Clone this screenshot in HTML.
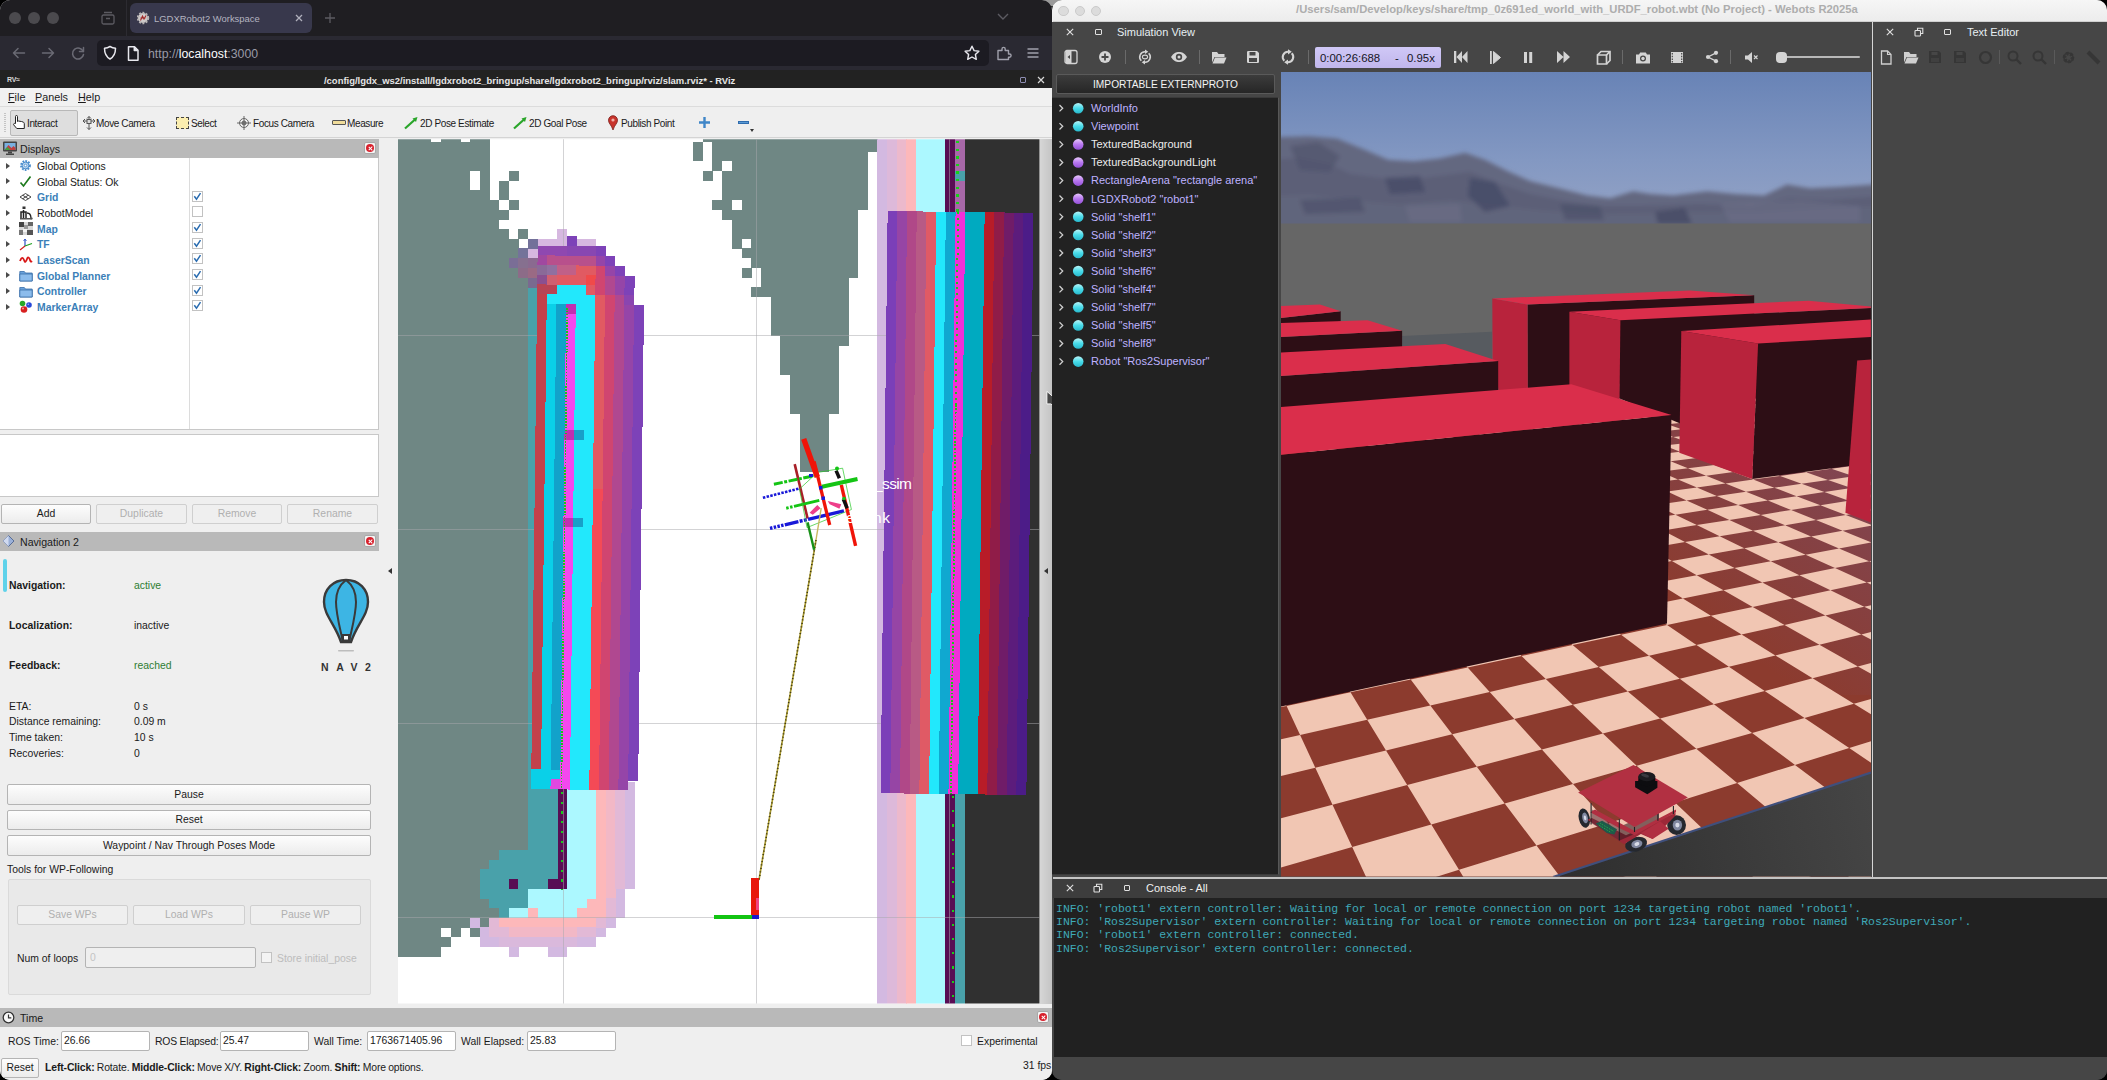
<!DOCTYPE html>
<html lang="en"><head><meta charset="utf-8"><title>LGDXRobot2 Workspace</title>
<style>
*{box-sizing:border-box;margin:0;padding:0}
html,body{width:2107px;height:1080px;overflow:hidden;background:#000}
body{position:relative;font-family:"Liberation Sans","DejaVu Sans",sans-serif;font-size:11px;color:#1a1a1a}
.a{position:absolute}
.t{position:absolute;white-space:nowrap;line-height:1}
/* firefox */
#ff{left:0;top:0;width:1052px;height:1080px;background:#efefef;border-radius:10px 10px 10px 10px;overflow:hidden}
#tabs{left:0;top:0;width:1052px;height:36px;background:#1f1e22}
#nav{left:0;top:36px;width:1052px;height:34px;background:#2a2932}
#url{left:97px;top:40px;width:892px;height:26px;border-radius:5px;background:#1c1b22}
#rt{left:0;top:70px;width:1052px;height:18px;background:#222222}
#menu{left:0;top:88px;width:1052px;height:19px;background:#f1f1f1;border-bottom:1px solid #dcdcdc}
#tool{left:0;top:107px;width:1052px;height:31px;background:#efefef;border-bottom:1px solid #d4d4d4}
.rv{font-family:"DejaVu Sans","Liberation Sans",sans-serif;font-size:10px;letter-spacing:-0.35px;color:#1b1b1b}
.hdr{background:#b9b9b9;height:19px}
#rvp .t{margin-top:1px}
.btn{position:absolute;border:1px solid #b4b4b4;border-radius:2px;background:linear-gradient(#fdfdfd,#ececec);text-align:center;white-space:nowrap}
.btn.dis{color:#b0b0b0;background:#efefef;border-color:#cfcfcf}
.inp{position:absolute;background:#fff;border:1px solid #b4b4b4;border-radius:2px;white-space:nowrap}
.cb{position:absolute;width:11px;height:11px;background:#fff;border:1px solid #c2c2c2}
.blue{color:#3b7fb8;font-weight:bold}
.x{position:absolute;width:12px;height:12px;border:1px solid #a8a8a8;border-radius:2px;background:#f4f4f4}
.x i{position:absolute;left:1px;top:1px;width:8px;height:8px;border-radius:50%;background:#d8202c}
.x i:before,.x i:after{content:"";position:absolute;left:3.5px;top:1.5px;width:1.2px;height:5px;background:#fff;transform:rotate(45deg)}
.x i:after{transform:rotate(-45deg)}
/* webots */
#wb{left:1052px;top:0;width:1055px;height:1080px;background:#464646;border-radius:10px;overflow:hidden}
.wt{position:absolute;white-space:nowrap;line-height:1;color:#e6eef2;font-size:11px}
</style></head><body>
<div class="a" style="left:1040px;top:0;width:26px;height:6px;background:#9a9a9a"></div>
<div id="ff" class="a">
<div id="tabs" class="a">
 <div class="a" style="left:9px;top:12px;width:12px;height:12px;border-radius:50%;background:#4b4a4e"></div>
 <div class="a" style="left:28px;top:12px;width:12px;height:12px;border-radius:50%;background:#4b4a4e"></div>
 <div class="a" style="left:47px;top:12px;width:12px;height:12px;border-radius:50%;background:#4b4a4e"></div>
 <svg class="a" style="left:100px;top:10px" width="16" height="16" viewBox="0 0 16 16" fill="none" stroke="#5c5b62" stroke-width="1.3"><rect x="2" y="5" width="12" height="9" rx="1.5"/><path d="M4 2.5h8M6 8.5h4"/></svg>
 <div class="a" style="left:126px;top:0;width:1px;height:36px;background:#2c2b31"></div>
 <div class="a" style="left:130px;top:3px;width:182px;height:30px;border-radius:6px;background:#38384c"></div>
 <svg class="a" style="left:136px;top:11px" width="14" height="14" viewBox="0 0 14 14"><circle cx="7" cy="7" r="5" fill="#d0cccc" stroke="#b8b4b4" stroke-width="2.400" stroke-dasharray="1.800 1.400"/><path d="M4.500 9.500l2-4.500 1.500 3 2-3.500M4.500 7h5" stroke="#a02828" stroke-width="1.100" fill="none"/></svg>
 <div class="t" style="left:154px;top:13.500px;font-size:9.450px;color:#b4b4c0">LGDXRobot2 Workspace</div>
 <svg class="a" style="left:294px;top:13px" width="10" height="10" viewBox="0 0 10 10" stroke="#b0b0bc" stroke-width="1.3"><path d="M2 2l6 6M8 2l-6 6"/></svg>
 <svg class="a" style="left:323px;top:11px" width="14" height="14" viewBox="0 0 14 14" stroke="#5c5b62" stroke-width="1.3"><path d="M7 2v10M2 7h10"/></svg>
 <svg class="a" style="left:996px;top:12px" width="14" height="10" viewBox="0 0 14 10" stroke="#5c5b62" stroke-width="1.4" fill="none"><path d="M2 2l5 5 5-5"/></svg>
</div>
<div id="nav" class="a"></div>
<div id="url" class="a"></div>
<svg class="a" style="left:10px;top:44px" width="18" height="18" viewBox="0 0 18 18" fill="none" stroke="#6a6a74" stroke-width="1.5" stroke-linecap="round" stroke-linejoin="round"><path d="M14.5 9h-11M8 4.5L3.5 9 8 13.5"/></svg>
<svg class="a" style="left:39px;top:44px" width="18" height="18" viewBox="0 0 18 18" fill="none" stroke="#6a6a74" stroke-width="1.5" stroke-linecap="round" stroke-linejoin="round"><path d="M3.5 9h11M10 4.5L14.500 9 10 13.5"/></svg>
<svg class="a" style="left:69px;top:44px" width="18" height="18" viewBox="0 0 18 18" fill="none" stroke="#6a6a74" stroke-width="1.5" stroke-linecap="round" stroke-linejoin="round"><path d="M14.200 7.500A5.500 5.500 0 1 0 14.500 10.500"/><path d="M14.500 3.500v4h-4" /></svg>
<svg class="a" style="left:102px;top:44px" width="16" height="18" viewBox="0 0 16 18" fill="none" stroke="#e8e8ee" stroke-width="1.5" stroke-linejoin="round"><path d="M8 2.500c2 1.300 3.800 1.700 5.500 1.800 0 5-1.500 8.500-5.500 10.700C4 12.800 2.500 9.300 2.500 4.300 4.200 4.200 6 3.800 8 2.500z"/></svg>
<svg class="a" style="left:126px;top:45px" width="14" height="17" viewBox="0 0 14 17" fill="none" stroke="#e8e8ee" stroke-width="1.5" stroke-linejoin="round"><path d="M2.500 1.800h6l3.500 3.500v10h-9.500z"/><path d="M8.300 2v3.500h3.500" fill="#e8e8ee"/></svg>
<div class="t" style="left:148px;top:48px;font-size:12.300px;color:#9a9aa6">http://<span style="color:#fbfbfe">localhost</span>:3000</div>
<svg class="a" style="left:963px;top:44px" width="18" height="18" viewBox="0 0 18 18" fill="none" stroke="#e8e8ee" stroke-width="1.4" stroke-linejoin="round"><path d="M9 2.200l2.100 4.400 4.800.6-3.500 3.300.9 4.800L9 13l-4.300 2.300.9-4.800L2.100 7.200l4.800-.6z"/></svg>
<svg class="a" style="left:995px;top:44px" width="18" height="18" viewBox="0 0 18 18" fill="none" stroke="#a0a0ac" stroke-width="1.4" stroke-linejoin="round"><path d="M3 6.500h4v-1.500a1.600 1.600 0 1 1 3.200 0v1.500h3.300v3.500h1a1.600 1.600 0 1 1 0 3.200h-1v2.300h-10.500z"/></svg>
<svg class="a" style="left:1026px;top:46px" width="14" height="14" viewBox="0 0 14 14" stroke="#a0a0ac" stroke-width="1.4"><path d="M1.500 3h11M1.500 7h11M1.500 11h11"/></svg>
<div id="rt" class="a">
 <div class="t" style="left:7px;top:6px;font-size:7px;font-weight:bold;color:#d8d8d8;letter-spacing:-0.3px">RV≈</div>
 <div class="t" style="left:324px;top:5.500px;font-size:9.450px;font-weight:bold;color:#e6e6e6;letter-spacing:0">/config/lgdx_ws2/install/lgdxrobot2_bringup/share/lgdxrobot2_bringup/rviz/slam.rviz* - RViz</div>
 <div class="a" style="left:1020px;top:6.500px;width:6px;height:6px;border:1px solid #8c8cb0;border-radius:1px"></div>
 <svg class="a" style="left:1037px;top:5.500px" width="8" height="8" viewBox="0 0 8 8" stroke="#d8d8d8" stroke-width="1.2"><path d="M1 1l6 6M7 1l-6 6"/></svg>
</div>
<div id="menu" class="a">
 <div class="t" style="left:8px;top:4px;font-size:10.8px"><u>F</u>ile</div>
 <div class="t" style="left:35px;top:4px;font-size:10.8px"><u>P</u>anels</div>
 <div class="t" style="left:78px;top:4px;font-size:10.8px"><u>H</u>elp</div>
</div>
<div id="tool" class="a" style="font-size:10px;letter-spacing:-0.38px">
 <div class="a" style="left:4px;top:6px;width:2px;height:19px;border-left:1px dotted #c4c4c4;border-right:1px dotted #c4c4c4"></div>
 <div class="a" style="left:10px;top:3px;width:68px;height:26px;border:1px solid #b8b8b8;border-radius:2px;background:#dedede"></div>
 <svg class="a" style="left:11px;top:7px" width="16" height="17" viewBox="0 0 16 17" fill="#fff" stroke="#222" stroke-width="1"><path d="M4.500 9.500v-7a1 1 0 0 1 2 0v5l1-.5 1.500.3 1.500.2 1.500.5c1 .4 1.300 1 1.300 2v4.500h-7.500l-3-3.500c-.7-1 .3-2 1.700-1.500z"/></svg>
 <div class="t" style="left:27px;top:12px">Interact</div>
 <svg class="a" style="left:81px;top:8px" width="16" height="16" viewBox="0 0 16 16" fill="none" stroke="#555" stroke-width="1"><path d="M8 1.500v13M2 6h12M8 1.500l-2 2M8 1.500l2 2M2 6l2-2M2 6l2 2M14 6l-2-2M14 6l-2 2M8 14.500l-2-2M8 14.500l2-2"/><rect x="6" y="4.500" width="4" height="4" fill="#ddd"/></svg>
 <div class="t" style="left:96px;top:12px">Move Camera</div>
 <div class="a" style="left:176px;top:10px;width:13px;height:12px;background:#fbeeb0;border:1px dashed #444"></div>
 <div class="t" style="left:191px;top:12px">Select</div>
 <svg class="a" style="left:236px;top:8px" width="16" height="16" viewBox="0 0 16 16" fill="none" stroke="#666" stroke-width="1"><circle cx="8" cy="8" r="4.500"/><circle cx="8" cy="8" r="2" fill="#888"/><path d="M8 1v14M1 8h14"/></svg>
 <div class="t" style="left:253px;top:12px">Focus Camera</div>
 <div class="a" style="left:332px;top:13px;width:14px;height:5px;background:#f0dc9a;border:1px solid #555;border-radius:1px"></div>
 <div class="t" style="left:347px;top:12px">Measure</div>
 <svg class="a" style="left:404px;top:9px" width="14" height="14" viewBox="0 0 14 14"><path d="M1 12.500L11 3.500" stroke="#2aa52a" stroke-width="2.200"/><path d="M13.500 1l-5 1.500 3.500 3.500z" fill="#2aa52a"/></svg>
 <div class="t" style="left:420px;top:12px">2D Pose Estimate</div>
 <svg class="a" style="left:513px;top:9px" width="14" height="14" viewBox="0 0 14 14"><path d="M1 12.500L11 3.500" stroke="#2aa52a" stroke-width="2.200"/><path d="M13.500 1l-5 1.500 3.500 3.500z" fill="#2aa52a"/></svg>
 <div class="t" style="left:529px;top:12px">2D Goal Pose</div>
 <svg class="a" style="left:607px;top:8px" width="12" height="16" viewBox="0 0 12 16"><path d="M6 15C4.500 10 1.500 8.500 1.500 5.200a4.500 4.500 0 0 1 9 0C10.500 8.500 7.500 10 6 15z" fill="#c8342c" stroke="#7a1c18" stroke-width=".8"/><circle cx="6" cy="5" r="1.600" fill="#f0b0a8"/></svg>
 <div class="t" style="left:621px;top:12px">Publish Point</div>
 <svg class="a" style="left:698px;top:9px" width="13" height="13" viewBox="0 0 13 13" stroke="#3f86c8" stroke-width="2.400"><path d="M6.500 1v11M1 6.500h11"/></svg>
 <div class="a" style="left:738px;top:14px;width:11px;height:3px;background:#5a9ad4;border:0.500px solid #2f6cae"></div>
 <div class="a" style="left:750px;top:22px;width:0;height:0;border-left:2.500px solid transparent;border-right:2.500px solid transparent;border-top:3px solid #333"></div>
</div>
<div class="a" id="rvp" style="left:0;top:139px;width:1052px;height:941px;background:#efefef;font-size:10.400px">
<!-- Displays panel ; coordinates relative to y=139 -->
<div class="a hdr" style="left:0;top:0;width:379px"></div>
<svg class="a" style="left:2px;top:1px" width="16" height="16" viewBox="0 0 16 16"><rect x="1" y="1.500" width="14" height="10" rx="1" fill="#444"/><rect x="2.500" y="3" width="11" height="7" fill="#7ab0e0"/><path d="M2.500 10l4-5 3 3 2-2 2 2v2z" fill="#c04040"/><path d="M2.500 10l3-3 3 3z" fill="#40a040"/><rect x="6" y="11.500" width="4" height="2" fill="#444"/><rect x="4" y="13.500" width="8" height="1.500" fill="#444"/></svg>
<div class="t" style="left:20px;top:4px;font-size:10.600px">Displays</div>
<div class="x" style="left:364px;top:3px"><i></i></div>
<div class="a" style="left:0;top:19px;width:379px;height:272px;background:#fff;border-right:1px solid #c8c8c8;border-bottom:1px solid #c8c8c8"></div>
<div class="a" style="left:189px;top:19px;width:1px;height:271px;background:#dcdcdc"></div>
<div class="a" style="left:6px;top:23.7px;width:0;height:0;border-top:3.200px solid transparent;border-bottom:3.200px solid transparent;border-left:4px solid #4a4a4a"></div>
<svg class="a" style="left:19px;top:20.2px" width="13" height="13" viewBox="0 0 13 13"><circle cx="6.500" cy="6.500" r="4.300" fill="none" stroke="#4a8ccc" stroke-width="2.200" stroke-dasharray="1.700 1.100"/><circle cx="6.500" cy="6.500" r="3.400" fill="#b8d4ee" stroke="#4a8ccc" stroke-width="1"/><circle cx="6.500" cy="6.500" r="1.300" fill="#fff" stroke="#4a8ccc" stroke-width=".8"/></svg>
<div class="t" style="left:37px;top:21.9px">Global Options</div>
<div class="a" style="left:6px;top:39.4px;width:0;height:0;border-top:3.200px solid transparent;border-bottom:3.200px solid transparent;border-left:4px solid #4a4a4a"></div>
<svg class="a" style="left:19px;top:35.9px" width="13" height="13" viewBox="0 0 13 13"><path d="M1.500 7.500l3 3.500 7-9.500" fill="none" stroke="#1e7a1e" stroke-width="1.700"/></svg>
<div class="t" style="left:37px;top:37.6px">Global Status: Ok</div>
<div class="a" style="left:6px;top:55.0px;width:0;height:0;border-top:3.200px solid transparent;border-bottom:3.200px solid transparent;border-left:4px solid #4a4a4a"></div>
<svg class="a" style="left:19px;top:51.5px" width="13" height="13" viewBox="0 0 13 13" fill="none" stroke="#333" stroke-width=".9"><path d="M6.500 2.500l5.500 3.500-5.500 3.500L1 6z"/><path d="M3.700 4.200l5.600 3.600M9.300 4.200L3.700 7.800"/></svg>
<div class="t blue" style="left:37px;top:53.2px">Grid</div>
<div class="cb" style="left:192px;top:51.7px"></div>
<svg class="a" style="left:193px;top:52.7px" width="9" height="9" viewBox="0 0 9 9"><path d="M1.300 4.200l2.200 3 4-6" fill="none" stroke="#2a6cb0" stroke-width="1.500"/></svg>
<div class="a" style="left:6px;top:70.7px;width:0;height:0;border-top:3.200px solid transparent;border-bottom:3.200px solid transparent;border-left:4px solid #4a4a4a"></div>
<svg class="a" style="left:19px;top:67.2px" width="14" height="14" viewBox="0 0 14 14"><rect x="3.500" y="0.500" width="3" height="2.500" fill="#333"/><path d="M2 13V6h5v7M4.500 4v9" stroke="#222" stroke-width="1.500" fill="none"/><path d="M8 7c3 0 4 2 4 5.500h1.500" stroke="#222" stroke-width="1.300" fill="none"/><rect x="1" y="12" width="12" height="1.500" fill="#555"/></svg>
<div class="t" style="left:37px;top:68.9px">RobotModel</div>
<div class="cb" style="left:192px;top:67.4px"></div>
<div class="a" style="left:6px;top:86.4px;width:0;height:0;border-top:3.200px solid transparent;border-bottom:3.200px solid transparent;border-left:4px solid #4a4a4a"></div>
<svg class="a" style="left:19px;top:82.9px" width="14" height="13" viewBox="0 0 14 13"><rect x="0" y="0" width="14" height="13" fill="#d8d8d8"/><rect x="0" y="0" width="5" height="5" fill="#444"/><rect x="5" y="3" width="4" height="4" fill="#999"/><rect x="9" y="0" width="5" height="4" fill="#666"/><rect x="0" y="8" width="4" height="5" fill="#777"/><rect x="8" y="8" width="6" height="5" fill="#555"/><rect x="4" y="7" width="4" height="3" fill="#f4f4f4"/></svg>
<div class="t blue" style="left:37px;top:84.6px">Map</div>
<div class="cb" style="left:192px;top:83.1px"></div>
<svg class="a" style="left:193px;top:84.1px" width="9" height="9" viewBox="0 0 9 9"><path d="M1.300 4.200l2.200 3 4-6" fill="none" stroke="#2a6cb0" stroke-width="1.500"/></svg>
<div class="a" style="left:6px;top:102.0px;width:0;height:0;border-top:3.200px solid transparent;border-bottom:3.200px solid transparent;border-left:4px solid #4a4a4a"></div>
<svg class="a" style="left:19px;top:98.5px" width="14" height="13" viewBox="0 0 14 13" fill="none" stroke-width="1.200"><path d="M6 8V1" stroke="#2a52c8"/><path d="M6 8L1 12" stroke="#d02020"/><path d="M6 8l7-2.500" stroke="#20a020"/><path d="M6 1l-1.500 2M6 1l1.500 2" stroke="#2a52c8" stroke-width=".8"/></svg>
<div class="t blue" style="left:37px;top:100.2px">TF</div>
<div class="cb" style="left:192px;top:98.7px"></div>
<svg class="a" style="left:193px;top:99.7px" width="9" height="9" viewBox="0 0 9 9"><path d="M1.300 4.200l2.200 3 4-6" fill="none" stroke="#2a6cb0" stroke-width="1.500"/></svg>
<div class="a" style="left:6px;top:117.7px;width:0;height:0;border-top:3.200px solid transparent;border-bottom:3.200px solid transparent;border-left:4px solid #4a4a4a"></div>
<svg class="a" style="left:19px;top:114.2px" width="14" height="13" viewBox="0 0 14 13"><path d="M1 8c1.500-4 3-4 4-1s2 2 3-1 2.500-1 3 1 1 2 2 1" fill="none" stroke="#d81818" stroke-width="1.800"/></svg>
<div class="t blue" style="left:37px;top:115.9px">LaserScan</div>
<div class="cb" style="left:192px;top:114.4px"></div>
<svg class="a" style="left:193px;top:115.4px" width="9" height="9" viewBox="0 0 9 9"><path d="M1.300 4.200l2.200 3 4-6" fill="none" stroke="#2a6cb0" stroke-width="1.500"/></svg>
<div class="a" style="left:6px;top:133.4px;width:0;height:0;border-top:3.200px solid transparent;border-bottom:3.200px solid transparent;border-left:4px solid #4a4a4a"></div>
<svg class="a" style="left:19px;top:129.9px" width="14" height="13" viewBox="0 0 14 13"><path d="M.8 2.500h4.500l1.200 1.500h6.700v8H.8z" fill="#6aa2dc" stroke="#3a6ea8" stroke-width=".8"/><path d="M.8 5h12.400v7H.8z" fill="#8cbcec" stroke="#3a6ea8" stroke-width=".8"/></svg>
<div class="t blue" style="left:37px;top:131.6px">Global Planner</div>
<div class="cb" style="left:192px;top:130.1px"></div>
<svg class="a" style="left:193px;top:131.1px" width="9" height="9" viewBox="0 0 9 9"><path d="M1.300 4.200l2.200 3 4-6" fill="none" stroke="#2a6cb0" stroke-width="1.500"/></svg>
<div class="a" style="left:6px;top:149.1px;width:0;height:0;border-top:3.200px solid transparent;border-bottom:3.200px solid transparent;border-left:4px solid #4a4a4a"></div>
<svg class="a" style="left:19px;top:145.6px" width="14" height="13" viewBox="0 0 14 13"><path d="M.8 2.500h4.500l1.200 1.500h6.700v8H.8z" fill="#6aa2dc" stroke="#3a6ea8" stroke-width=".8"/><path d="M.8 5h12.400v7H.8z" fill="#8cbcec" stroke="#3a6ea8" stroke-width=".8"/></svg>
<div class="t blue" style="left:37px;top:147.3px">Controller</div>
<div class="cb" style="left:192px;top:145.8px"></div>
<svg class="a" style="left:193px;top:146.8px" width="9" height="9" viewBox="0 0 9 9"><path d="M1.300 4.200l2.200 3 4-6" fill="none" stroke="#2a6cb0" stroke-width="1.500"/></svg>
<div class="a" style="left:6px;top:164.7px;width:0;height:0;border-top:3.200px solid transparent;border-bottom:3.200px solid transparent;border-left:4px solid #4a4a4a"></div>
<svg class="a" style="left:19px;top:161.2px" width="14" height="14" viewBox="0 0 14 14"><circle cx="3.500" cy="3.500" r="2.800" fill="#28a828"/><circle cx="10" cy="5" r="2.800" fill="#2848d8"/><circle cx="5" cy="9.500" r="3.300" fill="#d82020"/><circle cx="4" cy="8.500" r="1" fill="#f8a0a0"/><circle cx="9.300" cy="4.200" r=".8" fill="#a0b0f8"/></svg>
<div class="t blue" style="left:37px;top:162.9px">MarkerArray</div>
<div class="cb" style="left:192px;top:161.4px"></div>
<svg class="a" style="left:193px;top:162.4px" width="9" height="9" viewBox="0 0 9 9"><path d="M1.300 4.200l2.200 3 4-6" fill="none" stroke="#2a6cb0" stroke-width="1.500"/></svg>
<div class="a" style="left:0;top:295px;width:379px;height:63px;background:#fff;border:1px solid #c8c8c8;border-left:0"></div>
<div class="btn" style="left:1px;top:365px;width:90px;height:20px;line-height:18px">Add</div>
<div class="btn dis" style="left:96px;top:365px;width:91px;height:20px;line-height:18px">Duplicate</div>
<div class="btn dis" style="left:192px;top:365px;width:90px;height:20px;line-height:18px">Remove</div>
<div class="btn dis" style="left:287px;top:365px;width:91px;height:20px;line-height:18px">Rename</div>
<!-- Navigation 2 -->
<div class="a hdr" style="left:0;top:393px;width:379px"></div>
<svg class="a" style="left:2px;top:396px" width="13" height="12" viewBox="0 0 13 12"><path d="M6.500 .5l5.500 5.500-5.500 5.500L1 6z" fill="#9ab0d8" stroke="#445a88" stroke-width=".8"/><path d="M6.500 .5v11L1 6z" fill="#d0daf0"/></svg>
<div class="t" style="left:20px;top:397px;font-size:10.600px">Navigation 2</div>
<div class="x" style="left:364px;top:396px"><i></i></div>
<div class="a" style="left:3px;top:420px;width:4px;height:33px;background:#5fd2ea;border-radius:2px"></div>
<div class="t" style="left:9px;top:441px;font-weight:bold">Navigation:</div><div class="t" style="left:134px;top:441px;color:#2e7d32">active</div>
<div class="t" style="left:9px;top:481px;font-weight:bold">Localization:</div><div class="t" style="left:134px;top:481px">inactive</div>
<div class="t" style="left:9px;top:521px;font-weight:bold">Feedback:</div><div class="t" style="left:134px;top:521px;color:#2e7d32">reached</div>
<div class="t" style="left:9px;top:562px">ETA:</div><div class="t" style="left:134px;top:562px">0 s</div>
<div class="t" style="left:9px;top:577px">Distance remaining:</div><div class="t" style="left:134px;top:577px">0.09 m</div>
<div class="t" style="left:9px;top:593px">Time taken:</div><div class="t" style="left:134px;top:593px">10 s</div>
<div class="t" style="left:9px;top:609px">Recoveries:</div><div class="t" style="left:134px;top:609px">0</div>
<svg class="a" style="left:318px;top:438px" width="56" height="100" viewBox="0 0 56 100">
 <path d="M28 3C15 3 6 12 6 25c0 13 11 22 17 40h10c6-18 17-27 17-40C50 12 41 3 28 3z" fill="#3db5e4" stroke="#3a3a3a" stroke-width="2.400"/>
 <path d="M28 3c-8 6-10 14-10 22 0 12 4 26 7 40M28 3c8 6 10 14 10 22 0 12-4 26-7 40" fill="none" stroke="#3a3a3a" stroke-width="2"/>
 <rect x="23.500" y="57" width="9" height="8" fill="#3a3a3a"/><rect x="26" y="59" width="4" height="3.500" fill="#fff"/>
 <rect x="20" y="73" width="16" height="1.500" rx=".7" fill="#bdbdbd"/>
 <text x="28" y="94" text-anchor="middle" font-family="Liberation Sans,sans-serif" font-weight="bold" font-size="10.500" letter-spacing="7.500" fill="#333" dx="3.700">NAV2</text>
</svg>
<div class="btn" style="left:7px;top:645px;width:364px;height:21px;line-height:19px">Pause</div>
<div class="btn" style="left:7px;top:671px;width:364px;height:20px;line-height:18px">Reset</div>
<div class="btn" style="left:7px;top:696px;width:364px;height:21px;line-height:19px">Waypoint / Nav Through Poses Mode</div>
<div class="t" style="left:7px;top:725px">Tools for WP-Following</div>
<div class="a" style="left:8px;top:740px;width:363px;height:116px;background:#e9e9e9;border:1px solid #dadada;border-radius:2px"></div>
<div class="btn dis" style="left:17px;top:766px;width:111px;height:20px;line-height:18px">Save WPs</div>
<div class="btn dis" style="left:133px;top:766px;width:112px;height:20px;line-height:18px">Load WPs</div>
<div class="btn dis" style="left:250px;top:766px;width:111px;height:20px;line-height:18px">Pause WP</div>
<div class="t" style="left:17px;top:814px">Num of loops</div>
<div class="inp" style="left:85px;top:808px;width:171px;height:21px;background:#efefef;line-height:19px;padding-left:4px;color:#c4c4c4">0</div>
<div class="cb" style="left:261px;top:813px;background:#f4f4f4"></div>
<div class="t" style="left:277px;top:814px;color:#bcbcbc">Store initial_pose</div>
<div class="a" style="left:1040px;top:0;width:12px;height:865px;background:linear-gradient(to right,#d6d6d6,#c4c4c4)"></div>
<!-- splitter arrows -->
<div class="a" style="left:388px;top:429px;width:0;height:0;border-top:3px solid transparent;border-bottom:3px solid transparent;border-right:4px solid #333"></div>
<div class="a" style="left:1044px;top:429px;width:0;height:0;border-top:3px solid transparent;border-bottom:3px solid transparent;border-right:4px solid #333"></div>
<!-- Time -->
<div class="a hdr" style="left:0;top:869px;width:1052px"></div>
<svg class="a" style="left:2px;top:872px" width="13" height="13" viewBox="0 0 13 13"><circle cx="6.500" cy="6.500" r="5.300" fill="#f8f8f8" stroke="#333" stroke-width="1.300"/><path d="M6.500 3.500v3.300h2.800" fill="none" stroke="#333" stroke-width="1.200"/></svg>
<div class="t" style="left:20px;top:873px;font-size:10.600px">Time</div>
<div class="x" style="left:1037px;top:872px"><i></i></div>
<div class="t" style="left:8px;top:897px">ROS Time:</div><div class="inp" style="left:61px;top:892px;width:89px;height:20px;line-height:18px;padding-left:2px">26.66</div>
<div class="t" style="left:155px;top:897px;letter-spacing:-0.2px">ROS Elapsed:</div><div class="inp" style="left:220px;top:892px;width:89px;height:20px;line-height:18px;padding-left:2px">25.47</div>
<div class="t" style="left:314px;top:897px">Wall Time:</div><div class="inp" style="left:367px;top:892px;width:89px;height:20px;line-height:18px;padding-left:2px">1763671405.96</div>
<div class="t" style="left:461px;top:897px">Wall Elapsed:</div><div class="inp" style="left:527px;top:892px;width:89px;height:20px;line-height:18px;padding-left:2px">25.83</div>
<div class="cb" style="left:961px;top:896px"></div><div class="t" style="left:977px;top:897px">Experimental</div>
<div class="btn" style="left:1px;top:919px;width:38px;height:20px;line-height:18px">Reset</div>
<div class="t" style="left:45px;top:923px;letter-spacing:-0.12px;word-spacing:-0.5px"><b>Left-Click:</b> Rotate. <b>Middle-Click:</b> Move X/Y. <b>Right-Click:</b> Zoom. <b>Shift:</b> More options.</div>
<div class="t" style="left:1023px;top:921px">31 fps</div>
</div>
<svg class="a" style="left:0;top:0" width="1052" height="1080" viewBox="0 0 1052 1080" shape-rendering="crispEdges">
<defs><clipPath id="mc"><rect x="398" y="139.2" width="641.5" height="864.3"/></clipPath></defs>
<g clip-path="url(#mc)">
<rect x="398" y="139.2" width="641.5" height="864.3" fill="#ffffff"/>
<rect x="964.6" y="139.2" width="100" height="864.3" fill="#303030"/>
<path d="M392.3 132.0H431.4V142.0H392.3zM392.3 927.4H441.1V937.4H392.3zM392.3 946.8H441.1V956.8H392.3zM392.3 937.1H450.8V947.1H392.3zM392.3 170.8H470.2V190.5H392.3zM392.3 917.7H470.2V927.7H392.3zM392.3 869.2H479.9V898.6H392.3zM392.3 141.7H489.6V171.1H392.3zM392.3 190.2H489.6V200.2H392.3zM392.3 859.5H489.6V869.5H392.3zM392.3 898.3H489.6V908.3H392.3zM392.3 199.9H499.3V209.9H392.3zM392.3 219.3H499.3V229.3H392.3zM392.3 849.8H499.3V859.8H392.3zM392.3 908.0H499.3V918.0H392.3zM392.3 209.6H509.0V219.6H392.3zM392.3 229.0H509.0V239.0H392.3zM392.3 258.1H509.0V268.1H392.3zM392.3 238.7H518.7V258.4H392.3zM392.3 267.8H518.7V277.8H392.3zM392.3 277.5H528.4V850.1H392.3zM440.8 132.0H460.5V142.0H440.8zM450.5 927.4H460.5V937.4H450.5zM469.9 927.4H479.9V937.4H469.9zM469.9 132.0H489.6V142.0H469.9zM479.6 170.8H489.6V190.5H479.6zM479.6 917.7H489.6V927.7H479.6zM499.0 180.5H509.0V200.2H499.0zM508.7 170.8H518.7V180.8H508.7zM508.7 199.9H518.7V209.9H508.7zM518.4 229.0H528.4V239.0H518.4zM693.0 141.7H703.0V161.4H693.0zM702.7 170.8H712.7V180.8H702.7zM702.7 132.0H877.6V142.0H702.7zM712.4 161.1H722.4V171.1H712.4zM712.4 199.9H732.1V209.9H712.4zM712.4 151.4H867.9V161.4H712.4zM712.4 141.7H877.6V151.7H712.4zM722.1 209.6H858.2V219.6H722.1zM722.1 170.8H867.9V200.2H722.1zM731.8 238.7H741.8V248.7H731.8zM731.8 219.3H858.2V239.0H731.8zM731.8 161.1H867.9V171.1H731.8zM741.5 267.8H751.5V277.8H741.5zM741.5 248.4H858.2V258.4H741.5zM741.5 199.9H867.9V209.9H741.5zM751.2 287.2H848.5V297.2H751.2zM751.2 238.7H858.2V248.7H751.2zM751.2 258.1H858.2V268.1H751.2zM760.9 277.5H848.5V287.5H760.9zM760.9 267.8H858.2V277.8H760.9zM770.6 296.9H848.5V336.0H770.6zM780.3 345.4H838.8V374.8H780.3zM780.3 335.7H848.5V345.7H780.3zM790.0 374.5H838.8V413.6H790.0zM799.7 413.3H829.1V471.8H799.7z" fill="#6f8784"/>
<path d="M469.9 917.7H479.9V927.7H469.9zM479.6 927.4H489.6V937.4H479.6zM479.6 937.1H499.3V947.1H479.6zM508.7 946.8H518.7V956.8H508.7zM547.5 946.8H567.2V956.8H547.5zM576.6 937.1H596.3V947.1H576.6zM596.0 927.4H606.0V937.4H596.0zM605.7 917.7H615.7V927.7H605.7zM615.4 888.6H625.4V918.0H615.4zM625.1 781.9H635.1V888.9H625.1zM877.3 132.0H887.3V1015.0H877.3z" fill="#d3b9e1"/>
<path d="M887.0 132.0H897.0V1015.0H887.0z" fill="#ddb9da"/>
<path d="M896.7 132.0H906.7V1015.0H896.7z" fill="#ecb9cc"/>
<path d="M499.0 917.7H596.3V927.7H499.0zM528.1 908.0H538.1V918.0H528.1zM576.6 908.0H606.0V918.0H576.6zM586.3 898.3H606.0V908.3H586.3zM596.0 781.9H606.0V898.6H596.0zM906.4 132.0H916.4V1015.0H906.4z" fill="#fdb8ba"/>
<path d="M508.7 908.0H528.4V918.0H508.7zM528.1 898.3H586.6V908.3H528.1zM528.1 888.6H596.3V898.6H528.1zM537.8 908.0H576.9V918.0H537.8zM566.9 772.2H596.3V888.9H566.9zM916.1 132.0H945.5V1015.0H916.1z" fill="#acf8ff"/>
<path d="M508.7 878.9H518.7V888.9H508.7zM547.5 878.9H567.2V888.9H547.5zM557.2 772.2H567.2V879.2H557.2zM945.2 132.0H955.2V1015.0H945.2z" fill="#580d54"/>
<path d="M954.9 132.0H964.9V171.1H954.9zM954.9 180.5H964.9V345.7H954.9z" fill="#a768a8"/>
<path d="M479.6 878.9H509.0V888.9H479.6zM479.6 888.6H528.4V898.6H479.6zM479.6 869.2H557.5V879.2H479.6zM489.3 898.3H528.4V908.3H489.3zM489.3 859.5H557.5V869.5H489.3zM499.0 908.0H509.0V918.0H499.0zM499.0 849.8H557.5V859.8H499.0zM518.4 878.9H547.8V888.9H518.4zM528.1 287.2H538.1V772.5H528.1zM528.1 772.2H557.5V850.1H528.1zM954.9 170.8H964.9V180.8H954.9zM954.9 345.4H964.9V1015.0H954.9z" fill="#49a1aa"/>
<path d="M528.1 248.4H538.1V258.4H528.1zM537.8 238.7H567.2V248.7H537.8zM557.2 229.0H567.2V239.0H557.2zM576.6 238.7H596.3V248.7H576.6z" fill="#d6b8e0"/>
<path d="M528.1 238.7H538.1V248.7H528.1z" fill="#73719a"/>
<path d="M518.4 248.4H528.4V258.4H518.4z" fill="#74739a"/>
<path d="M508.7 258.1H518.7V268.1H508.7z" fill="#7a6e96"/>
<path d="M518.4 258.1H528.4V268.1H518.4z" fill="#86708f"/>
<path d="M528.1 258.1H538.1V268.1H528.1z" fill="#8a6a90"/>
<path d="M518.4 267.8H528.4V277.8H518.4z" fill="#8c6c88"/>
<path d="M528.1 267.8H538.1V277.8H528.1z" fill="#9a6a84"/>
<path d="M528.1 277.5H538.1V287.5H528.1z" fill="#7a6a90"/>
<path d="M537.8 277.5H547.8V287.5H537.8z" fill="#8a5a98"/>
<path d="M508.7 927.4H576.9V937.4H508.7zM605.7 781.9H615.7V898.6H605.7z" fill="#f2b8c6"/>
<path d="M489.3 917.7H499.3V927.7H489.3zM489.3 927.4H509.0V937.4H489.3zM576.6 927.4H596.3V937.4H576.6zM596.0 917.7H606.0V927.7H596.0zM605.7 898.3H615.7V918.0H605.7zM615.4 781.9H625.4V888.9H615.4z" fill="#e2b9d6"/>
<path d="M499.0 937.1H576.9V947.1H499.0z" fill="#dab9dc"/>
<rect x="562.8" y="139.2" width="1" height="864.3" fill="#a8a8ac" opacity="0.5"/>
<rect x="756.1" y="139.2" width="1" height="864.3" fill="#a8a8ac" opacity="0.5"/>
<rect x="949.4" y="139.2" width="1" height="864.3" fill="#a8a8ac" opacity="0.5"/>
<rect x="398" y="334.9" width="641.5" height="1" fill="#a8a8ac" opacity="0.5"/>
<rect x="398" y="528.9" width="641.5" height="1" fill="#a8a8ac" opacity="0.5"/>
<rect x="398" y="722.5" width="641.5" height="1" fill="#a8a8ac" opacity="0.5"/>
<rect x="398" y="916.5" width="641.5" height="1" fill="#a8a8ac" opacity="0.5"/>
<g transform="rotate(0.7 570 305)">
<rect x="537.0" y="246.0" width="10.00" height="10.0" fill="#8f48b0"/>
<rect x="537.0" y="255.7" width="10.00" height="10.0" fill="#a048a0"/>
<rect x="537.0" y="265.4" width="10.00" height="10.0" fill="#8a6a98"/>
<rect x="537.0" y="275.1" width="10.00" height="10.0" fill="#8a5090"/>
<rect x="537.0" y="284.8" width="10.00" height="10.0" fill="#b84454"/>
<rect x="537.0" y="294.5" width="10.00" height="475.6" fill="#c2414b"/>
<rect x="537.0" y="769.8" width="10.00" height="19.7" fill="#0ad0e8"/>
<rect x="546.7" y="246.0" width="10.00" height="10.0" fill="#8f48b0"/>
<rect x="546.7" y="255.7" width="10.00" height="10.0" fill="#b8508c"/>
<rect x="546.7" y="265.4" width="10.00" height="10.0" fill="#9070a0"/>
<rect x="546.7" y="275.1" width="10.00" height="10.0" fill="#d06070"/>
<rect x="546.7" y="284.8" width="10.00" height="10.0" fill="#b84454"/>
<rect x="546.7" y="294.5" width="10.00" height="10.0" fill="#22e8fc"/>
<rect x="546.7" y="304.2" width="10.00" height="485.3" fill="#0ad0e8"/>
<rect x="556.4" y="246.0" width="10.00" height="10.0" fill="#8f48b0"/>
<rect x="556.4" y="255.7" width="10.00" height="10.0" fill="#b8508c"/>
<rect x="556.4" y="265.4" width="10.00" height="10.0" fill="#c06088"/>
<rect x="556.4" y="275.1" width="10.00" height="10.0" fill="#e15a62"/>
<rect x="556.4" y="284.8" width="10.00" height="19.7" fill="#22e8fc"/>
<rect x="556.4" y="304.2" width="10.00" height="465.9" fill="#12a2ca"/>
<rect x="556.4" y="769.8" width="10.00" height="10.0" fill="#0ad0e8"/>
<rect x="556.4" y="779.5" width="10.00" height="10.0" fill="#e048e0"/>
<rect x="566.1" y="236.3" width="10.00" height="10.0" fill="#7d42b8"/>
<rect x="566.1" y="246.0" width="10.00" height="10.0" fill="#8847b2"/>
<rect x="566.1" y="255.7" width="10.00" height="10.0" fill="#b8508c"/>
<rect x="566.1" y="265.4" width="10.00" height="10.0" fill="#c06088"/>
<rect x="566.1" y="275.1" width="10.00" height="10.0" fill="#e15a62"/>
<rect x="566.1" y="284.8" width="10.00" height="19.7" fill="#22e8fc"/>
<rect x="566.1" y="304.2" width="10.00" height="10.0" fill="#c030b0"/>
<rect x="566.1" y="313.9" width="10.00" height="116.7" fill="#f348ee"/>
<rect x="566.1" y="430.3" width="10.00" height="10.0" fill="#c030b0"/>
<rect x="566.1" y="440.0" width="10.00" height="77.9" fill="#f348ee"/>
<rect x="566.1" y="517.6" width="10.00" height="10.0" fill="#c030b0"/>
<rect x="566.1" y="527.3" width="10.00" height="262.2" fill="#f348ee"/>
<rect x="575.8" y="246.0" width="10.00" height="10.0" fill="#8847b2"/>
<rect x="575.8" y="255.7" width="10.00" height="10.0" fill="#b8508c"/>
<rect x="575.8" y="265.4" width="10.00" height="19.7" fill="#e15a62"/>
<rect x="575.8" y="284.8" width="10.00" height="145.8" fill="#22e8fc"/>
<rect x="575.8" y="430.3" width="10.00" height="10.0" fill="#18a0c8"/>
<rect x="575.8" y="440.0" width="10.00" height="77.9" fill="#22e8fc"/>
<rect x="575.8" y="517.6" width="10.00" height="10.0" fill="#18a0c8"/>
<rect x="575.8" y="527.3" width="10.00" height="262.2" fill="#22e8fc"/>
<rect x="585.5" y="246.0" width="10.00" height="10.0" fill="#8847b2"/>
<rect x="585.5" y="255.7" width="10.00" height="10.0" fill="#b8508c"/>
<rect x="585.5" y="265.4" width="10.00" height="10.0" fill="#e15a62"/>
<rect x="585.5" y="275.1" width="10.00" height="10.0" fill="#f04a4a"/>
<rect x="585.5" y="284.8" width="10.00" height="10.0" fill="#e15a62"/>
<rect x="585.5" y="294.5" width="10.00" height="495.0" fill="#22e8fc"/>
<rect x="595.2" y="246.0" width="10.00" height="10.0" fill="#7d42b8"/>
<rect x="595.2" y="255.7" width="10.00" height="10.0" fill="#9545a8"/>
<rect x="595.2" y="265.4" width="10.00" height="29.4" fill="#d04570"/>
<rect x="595.2" y="294.5" width="10.00" height="194.3" fill="#e15a62"/>
<rect x="595.2" y="488.5" width="10.00" height="301.0" fill="#f44a56"/>
<rect x="604.9" y="255.7" width="10.00" height="10.0" fill="#7d42b8"/>
<rect x="604.9" y="265.4" width="10.00" height="10.0" fill="#9545a8"/>
<rect x="604.9" y="275.1" width="10.00" height="19.7" fill="#b04890"/>
<rect x="604.9" y="294.5" width="10.00" height="495.0" fill="#d04570"/>
<rect x="614.6" y="265.4" width="10.00" height="10.0" fill="#7d42b8"/>
<rect x="614.6" y="275.1" width="10.00" height="19.7" fill="#9545a8"/>
<rect x="614.6" y="294.5" width="10.00" height="495.0" fill="#b04890"/>
<rect x="624.3" y="275.1" width="10.00" height="19.7" fill="#7d42b8"/>
<rect x="624.3" y="294.5" width="10.00" height="10.0" fill="#8a45b0"/>
<rect x="624.3" y="304.2" width="10.00" height="485.3" fill="#9545a8"/>
<rect x="634.0" y="304.2" width="10.00" height="475.6" fill="#7d42b8"/>
<path d="M567.300 308V789" stroke="#18c818" stroke-width="1.600" stroke-dasharray="1.600 1.300"/>
<rect x="886.5" y="207.200" width="10.00" height="582.200" fill="#7b3fb8"/>
<rect x="896.2" y="207.200" width="10.00" height="582.200" fill="#9645a5"/>
<rect x="905.9" y="207.200" width="10.00" height="582.200" fill="#b04888"/>
<rect x="915.6" y="207.200" width="10.00" height="582.200" fill="#b85a85"/>
<rect x="925.3" y="207.200" width="10.00" height="582.200" fill="#e05a65"/>
<rect x="935.0" y="207.200" width="10.00" height="582.200" fill="#22e8fc"/>
<rect x="944.7" y="207.200" width="10.00" height="582.200" fill="#10a8d0"/>
<rect x="954.4" y="207.200" width="10.00" height="582.200" fill="#f030d8"/>
<rect x="964.1" y="207.200" width="19.70" height="582.200" fill="#00aac0"/>
<rect x="983.5" y="207.200" width="10.00" height="582.200" fill="#b81c28"/>
<rect x="993.2" y="207.200" width="10.00" height="582.200" fill="#901c48"/>
<rect x="1002.9" y="207.200" width="10.00" height="582.200" fill="#701c68"/>
<rect x="1012.6" y="207.200" width="10.00" height="582.200" fill="#5c1c7c"/>
<rect x="1022.3" y="207.200" width="10.00" height="582.200" fill="#4c1c88"/>
<path d="M956.9 207.200V400" stroke="#18c818" stroke-width="2" stroke-dasharray="2 3.800"/>
<path d="M956.9 400V789" stroke="#18c818" stroke-width="1.800" stroke-dasharray="1.800 1.800"/>
</g>
<path d="M957.300 141V212" stroke="#18d018" stroke-width="2.400" stroke-dasharray="2.400 5.200"/>
<path d="M953 796V1003" stroke="#18d018" stroke-width="2.200" stroke-dasharray="2.200 12"/>
<path d="M562.300 792V890" stroke="#18c818" stroke-width="2.200" stroke-dasharray="2.200 7.500"/>
<path d="M816 540L759 880" stroke="#a8982c" stroke-width="1.600" shape-rendering="auto"/>
<path d="M816 540L759 880" stroke="#3a3410" stroke-width="1.600" stroke-dasharray="1 2.500" shape-rendering="auto"/>
<rect x="751" y="878" width="8" height="40" fill="#e8180c"/><rect x="713.800" y="914.800" width="38" height="4" fill="#12c412"/><rect x="751.500" y="914.500" width="7.500" height="4.500" fill="#1818c8"/>
<rect x="756.300" y="898" width="2.500" height="12" fill="#f050a0" opacity="0.8"/>
<g shape-rendering="auto" stroke-linecap="butt">
<path d="M794.700 464.100L807.600 518.500" stroke="#a82028" stroke-width="2.600"/>
<path d="M773.900 484.200L814.100 475.800" stroke="#14c414" stroke-width="3" stroke-dasharray="9 1.500 3 1.500"/>
<path d="M786.200 508.200L819.300 500.400" stroke="#14c414" stroke-width="3" stroke-dasharray="2.500 1.500 2.500 1.500 30"/>
<path d="M762.900 497.800L798.500 488.700" stroke="#1818d8" stroke-width="2.600" stroke-dasharray="2.500 1.300"/>
<path d="M770 528.300L843.900 510.800" stroke="#1818d8" stroke-width="3.400" stroke-dasharray="2.500 1.300 2.500 1.300 2.500 1.300 2.500 1.300 14 1.300 3 1.300 3 1.300 40"/>
<path d="M817.300 472.500L842.600 468.200L851.400 509.500L807 527.600L799.500 489z" fill="none" stroke="#28c828" stroke-width="0.700"/>
<path d="M809.600 512.700L817.300 504.900L820.600 508.200L812.800 514.700z M827.700 501L841.300 504.300L839.400 508.800L829.700 504.300z" fill="#ee3f8a"/>
<path d="M803.700 438.800L817.300 477" stroke="#f01408" stroke-width="5.400"/>
<path d="M814.100 461.500L829.700 525" stroke="#f01408" stroke-width="3.300"/>
<path d="M841.300 484.800L855.600 545.800" stroke="#f01408" stroke-width="3.400"/>
<path d="M821.900 486.800L857.500 479" stroke="#14c414" stroke-width="4"/>
<path d="M836.100 470.600L839.400 478.300M843.300 499.100L847.200 508.200" stroke="#101010" stroke-width="3.500"/>
<circle cx="837" cy="468.500" r="2" fill="#14c414"/><circle cx="844" cy="498.500" r="1.800" fill="#14c414"/>
<path d="M807.600 522.400L814.100 549.700" stroke="#189018" stroke-width="2.400"/>
<path d="M821.200 508.200L816 540" stroke="#c8b860" stroke-width="1.400"/>
<rect x="819" y="486" width="3.500" height="3.500" fill="#1818d8"/><rect x="821.500" y="496.500" width="3.500" height="3.500" fill="#1818d8"/><rect x="809" y="474" width="4" height="3" fill="#1818d8"/>
</g>
<g shape-rendering="auto" font-family="Liberation Sans,sans-serif" fill="#ffffff" font-size="15.500">
<text x="874" y="489" textLength="38">_ssim</text>
<text x="846" y="523" textLength="44">e_link</text>
</g>
</g></svg>
<svg class="a" style="left:1040px;top:385px" width="12" height="26" viewBox="1040 385 12 26"><path d="M1046.900 391.400L1052.500 396.300V405.200L1050.800 403.900H1046.900z" fill="#474747" stroke="#ffffff" stroke-width="0.900"/></svg>
</div>
<div id="wb" class="a">
<div class="a" style="left:0;top:0;width:2px;height:22px;background:#f0f0f0"></div>
<div class="a" id="wbi" style="left:1px;top:0;width:1054px;height:1080px">
<div class="a" style="left:0;top:0;width:1054px;height:21.500px;background:linear-gradient(#f6f6f6,#ececec);border-bottom:1px solid #d0d0d0"></div>
<div class="a" style="left:5px;top:5.500px;width:10.500px;height:10.500px;border-radius:50%;background:#dcdcdc;border:0.500px solid #cacaca"></div>
<div class="a" style="left:21.500px;top:5.500px;width:10.500px;height:10.500px;border-radius:50%;background:#dcdcdc;border:0.500px solid #cacaca"></div>
<div class="a" style="left:37.500px;top:5.500px;width:10.500px;height:10.500px;border-radius:50%;background:#dcdcdc;border:0.500px solid #cacaca"></div>
<div class="t" style="left:243px;top:4px;font-size:11.250px;font-weight:bold;color:#adadad">/Users/sam/Develop/keys/share/tmp_0z691ed_world_with_URDF_robot.wbt (No Project) - Webots R2025a</div>
<!-- Simulation View title -->
<svg class="a" style="left:13px;top:28px" width="8" height="8" viewBox="0 0 8 8" stroke="#e0e0e0" stroke-width="1.100"><path d="M.8 .8l6.400 6.400M7.200 .8L.8 7.200"/></svg>
<div class="a" style="left:42px;top:28.500px;width:6.500px;height:6.500px;border:1.200px solid #e0e0e0;border-radius:1px"></div>
<div class="wt" style="left:64px;top:26.500px">Simulation View</div>
<svg class="a" style="left:11.0px;top:49.0px" width="14" height="16" viewBox="0 0 14 16" ><rect x="1" y="1.500" width="12" height="13" rx="2" fill="none" stroke="#d4d4d4" stroke-width="1.300"/><rect x="1.500" y="2" width="6" height="12" fill="#d4d4d4"/><path d="M6 6l-2.500 2 2.500 2z" fill="#464646"/></svg>
<svg class="a" style="left:45.0px;top:50.0px" width="14" height="14" viewBox="0 0 14 14" ><circle cx="7" cy="7" r="6" fill="#d4d4d4"/><path d="M7 3.500v7M3.500 7h7" stroke="#464646" stroke-width="1.800"/></svg>
<div class="a" style="left:72px;top:50px;width:1px;height:14px;background:#6a6a6a"></div>
<svg class="a" style="left:84.0px;top:49.0px" width="16" height="16" viewBox="0 0 16 16" ><path d="M4.300 11.700A5.200 5.200 0 0 1 8 2.800M11.700 4.300A5.200 5.200 0 0 1 8 13.200" fill="none" stroke="#d4d4d4" stroke-width="1.600"/><path d="M8 .5l3.300 2.300L8 5.100zM8 10.900L4.700 13.200 8 15.500z" fill="#d4d4d4"/><ellipse cx="8" cy="8" rx="2.600" ry="1.900" fill="none" stroke="#d4d4d4" stroke-width="1.100"/></svg>
<svg class="a" style="left:117.0px;top:51.0px" width="18" height="12" viewBox="0 0 18 12" ><path d="M1 6c2.500-4 5-5 8-5s5.500 1 8 5c-2.500 4-5 5-8 5s-5.500-1-8-5z" fill="#d4d4d4"/><circle cx="9" cy="6" r="3.200" fill="#464646"/><circle cx="9" cy="6" r="1.500" fill="#d4d4d4"/></svg>
<div class="a" style="left:146px;top:50px;width:1px;height:14px;background:#6a6a6a"></div>
<svg class="a" style="left:157.5px;top:50.0px" width="16" height="14" viewBox="0 0 16 14" ><path d="M1 2h5l1.500 2h6v3H3.500L1 12.500z" fill="#d4d4d4"/><path d="M4 7.500h11.500l-2.500 6H1.500z" fill="#d4d4d4"/></svg>
<svg class="a" style="left:193.0px;top:50.0px" width="14" height="14" viewBox="0 0 14 14" ><path d="M1 2.200a1.200 1.200 0 0 1 1.200-1.200h8.800l2 2v8.800a1.200 1.200 0 0 1-1.200 1.200H2.200a1.200 1.200 0 0 1-1.200-1.200z" fill="#d4d4d4"/><rect x="3.500" y="2" width="6" height="3.500" fill="#464646"/><rect x="3" y="8" width="8" height="4" fill="#464646"/></svg>
<svg class="a" style="left:227.0px;top:49.0px" width="16" height="16" viewBox="0 0 16 16" ><path d="M4.300 11.700A5.200 5.200 0 0 1 8 2.800M11.700 4.300A5.200 5.200 0 0 1 8 13.200" fill="none" stroke="#d4d4d4" stroke-width="2"/><path d="M8 .2l3.800 2.600L8 5.400zM8 10.600L4.200 13.200 8 15.800z" fill="#d4d4d4"/></svg>
<div class="a" style="left:255px;top:50px;width:1px;height:14px;background:#6a6a6a"></div>
<svg class="a" style="left:399.5px;top:50.0px" width="15" height="14" viewBox="0 0 15 14" ><rect x="1" y="1" width="2.300" height="12" fill="#d4d4d4"/><path d="M9 1v12L3.500 7zM14.500 1v12L9 7z" fill="#d4d4d4"/></svg>
<svg class="a" style="left:436.0px;top:49.5px" width="12" height="15" viewBox="0 0 12 15" ><rect x="1" y="1" width="1.800" height="13" fill="#d4d4d4"/><path d="M4.500 1.500l7 6-7 6z" fill="#d4d4d4" stroke="#d4d4d4" stroke-width="1" stroke-linejoin="round"/></svg>
<svg class="a" style="left:470.0px;top:50.5px" width="10" height="13" viewBox="0 0 10 13" ><rect x="1" y="1" width="3" height="11" fill="#d4d4d4"/><rect x="6.200" y="1" width="3" height="11" fill="#d4d4d4"/></svg>
<svg class="a" style="left:502.5px;top:50.0px" width="15" height="14" viewBox="0 0 15 14" ><path d="M1 1l6.500 6L1 13zM7.500 1L14 7l-6.500 6z" fill="#d4d4d4"/></svg>
<svg class="a" style="left:542.5px;top:49.5px" width="15" height="15" viewBox="0 0 15 15" ><path d="M1.500 5h9v9h-9z" fill="none" stroke="#d4d4d4" stroke-width="1.700"/><path d="M1.500 5l3.500-3.500h9v9L10.500 14M10.500 5L14 1.500" fill="none" stroke="#d4d4d4" stroke-width="1.700"/></svg>
<div class="a" style="left:569px;top:50px;width:1px;height:14px;background:#6a6a6a"></div>
<svg class="a" style="left:581.5px;top:50.5px" width="16" height="13" viewBox="0 0 16 13" ><path d="M1 3.500h3l1.200-2h5.600l1.200 2h3v9H1z" fill="#d4d4d4"/><circle cx="8" cy="7.500" r="3" fill="#464646"/><circle cx="8" cy="7.500" r="1.700" fill="#d4d4d4"/></svg>
<svg class="a" style="left:617.0px;top:50.5px" width="14" height="13" viewBox="0 0 14 13" ><rect x="1" y="1" width="12" height="11" fill="#d4d4d4"/><path d="M2.300 2v9.500M11.700 2v9.500" stroke="#464646" stroke-width="1.200" stroke-dasharray="1.500 1.200"/></svg>
<svg class="a" style="left:652.0px;top:50.0px" width="14" height="14" viewBox="0 0 14 14" ><circle cx="11" cy="2.800" r="2.100" fill="#d4d4d4"/><circle cx="3" cy="7" r="2.100" fill="#d4d4d4"/><circle cx="11" cy="11.200" r="2.100" fill="#d4d4d4"/><path d="M11 2.800L3 7l8 4.200" fill="none" stroke="#d4d4d4" stroke-width="1.300"/></svg>
<div class="a" style="left:677px;top:50px;width:1px;height:14px;background:#6a6a6a"></div>
<svg class="a" style="left:690.5px;top:50.5px" width="15" height="13" viewBox="0 0 15 13" ><path d="M1 4.500h3l4-3.500v11l-4-3.500H1z" fill="#d4d4d4"/><path d="M10 4.500l3.500 3.500M13.500 4.500L10 8" stroke="#d4d4d4" stroke-width="1.200"/></svg>
<div class="a" style="left:729px;top:55.500px;width:78px;height:2.500px;background:#b8b8b8;border-radius:1px"></div><div class="a" style="left:723px;top:51.500px;width:11px;height:11px;border-radius:4px;background:#d4d4d4"></div>
<!-- time box -->
<div class="a" style="left:262px;top:46.500px;width:125.500px;height:21.500px;background:linear-gradient(#d0c8f6,#c0b6ec);border-radius:2px"></div>
<div class="t" style="left:267px;top:53px;font-size:11.400px;color:#15151f">0:00:26:688</div>
<div class="t" style="left:342px;top:53px;font-size:11.400px;color:#15151f">-</div>
<div class="t" style="left:354px;top:53px;font-size:11.400px;color:#15151f">0.95x</div>
<!-- importable -->
<div class="a" style="left:3px;top:74px;width:219px;height:20px;border:1px solid #5a5a5a;border-radius:2px;background:linear-gradient(#3c3c3c,#262626)"></div>
<div class="t" style="left:3px;top:80px;width:219px;text-align:center;font-size:10.200px;color:#f4f4f4">IMPORTABLE EXTERNPROTO</div>
<!-- tree -->
<div class="a" style="left:-1px;top:97px;width:227px;height:778px;background:#222222;border:1px solid #585858;border-left:0;border-bottom-color:#3a3a3a;border-top-color:#3a3a3a"></div>
<svg class="a" style="left:0;top:0" width="230" height="400" viewBox="0 0 230 400"><defs><linearGradient id="gc" x1="0" y1="0" x2="0" y2="1"><stop offset="0" stop-color="#b8f4f8"/><stop offset=".5" stop-color="#48dcea"/><stop offset="1" stop-color="#28b8cc"/></linearGradient><linearGradient id="gp" x1="0" y1="0" x2="0" y2="1"><stop offset="0" stop-color="#e8c8fc"/><stop offset=".5" stop-color="#b878f0"/><stop offset="1" stop-color="#9450d8"/></linearGradient></defs>
<path d="M6.500 105.0l3.200 3.200-3.200 3.200" fill="none" stroke="#d0d0d0" stroke-width="1.300"/>
<circle cx="25.200" cy="108.2" r="5.300" fill="url(#gc)"/>
<path d="M6.500 123.1l3.200 3.200-3.200 3.200" fill="none" stroke="#d0d0d0" stroke-width="1.300"/>
<circle cx="25.200" cy="126.3" r="5.300" fill="url(#gc)"/>
<path d="M6.500 141.2l3.200 3.200-3.200 3.200" fill="none" stroke="#d0d0d0" stroke-width="1.300"/>
<circle cx="25.200" cy="144.4" r="5.300" fill="url(#gp)"/>
<path d="M6.500 159.3l3.200 3.200-3.200 3.200" fill="none" stroke="#d0d0d0" stroke-width="1.300"/>
<circle cx="25.200" cy="162.5" r="5.300" fill="url(#gp)"/>
<path d="M6.500 177.4l3.200 3.200-3.200 3.200" fill="none" stroke="#d0d0d0" stroke-width="1.300"/>
<circle cx="25.200" cy="180.6" r="5.300" fill="url(#gp)"/>
<path d="M6.500 195.5l3.200 3.200-3.200 3.200" fill="none" stroke="#d0d0d0" stroke-width="1.300"/>
<circle cx="25.200" cy="198.7" r="5.300" fill="url(#gp)"/>
<path d="M6.500 213.6l3.200 3.200-3.200 3.200" fill="none" stroke="#d0d0d0" stroke-width="1.300"/>
<circle cx="25.200" cy="216.8" r="5.300" fill="url(#gc)"/>
<path d="M6.500 231.7l3.200 3.200-3.200 3.200" fill="none" stroke="#d0d0d0" stroke-width="1.300"/>
<circle cx="25.200" cy="234.9" r="5.300" fill="url(#gc)"/>
<path d="M6.500 249.8l3.200 3.200-3.200 3.200" fill="none" stroke="#d0d0d0" stroke-width="1.300"/>
<circle cx="25.200" cy="253.0" r="5.300" fill="url(#gc)"/>
<path d="M6.500 267.9l3.200 3.200-3.200 3.200" fill="none" stroke="#d0d0d0" stroke-width="1.300"/>
<circle cx="25.200" cy="271.1" r="5.300" fill="url(#gc)"/>
<path d="M6.500 286.0l3.200 3.200-3.200 3.200" fill="none" stroke="#d0d0d0" stroke-width="1.300"/>
<circle cx="25.200" cy="289.2" r="5.300" fill="url(#gc)"/>
<path d="M6.500 304.1l3.200 3.200-3.200 3.200" fill="none" stroke="#d0d0d0" stroke-width="1.300"/>
<circle cx="25.200" cy="307.3" r="5.300" fill="url(#gc)"/>
<path d="M6.500 322.2l3.200 3.200-3.200 3.200" fill="none" stroke="#d0d0d0" stroke-width="1.300"/>
<circle cx="25.200" cy="325.4" r="5.300" fill="url(#gc)"/>
<path d="M6.500 340.3l3.200 3.200-3.200 3.200" fill="none" stroke="#d0d0d0" stroke-width="1.300"/>
<circle cx="25.200" cy="343.5" r="5.300" fill="url(#gc)"/>
<path d="M6.500 358.4l3.200 3.200-3.200 3.200" fill="none" stroke="#d0d0d0" stroke-width="1.300"/>
<circle cx="25.200" cy="361.6" r="5.300" fill="url(#gc)"/>
</svg>
<div class="t" style="left:38px;top:103.0px;font-size:11px;color:#bfb2ff">WorldInfo</div>
<div class="t" style="left:38px;top:121.1px;font-size:11px;color:#bfb2ff">Viewpoint</div>
<div class="t" style="left:38px;top:139.2px;font-size:11px;color:#ececec">TexturedBackground</div>
<div class="t" style="left:38px;top:157.3px;font-size:11px;color:#ececec">TexturedBackgroundLight</div>
<div class="t" style="left:38px;top:175.4px;font-size:11px;color:#bfb2ff">RectangleArena "rectangle arena"</div>
<div class="t" style="left:38px;top:193.5px;font-size:11px;color:#bfb2ff">LGDXRobot2 "robot1"</div>
<div class="t" style="left:38px;top:211.6px;font-size:11px;color:#bfb2ff">Solid "shelf1"</div>
<div class="t" style="left:38px;top:229.7px;font-size:11px;color:#bfb2ff">Solid "shelf2"</div>
<div class="t" style="left:38px;top:247.8px;font-size:11px;color:#bfb2ff">Solid "shelf3"</div>
<div class="t" style="left:38px;top:265.9px;font-size:11px;color:#bfb2ff">Solid "shelf6"</div>
<div class="t" style="left:38px;top:284.0px;font-size:11px;color:#bfb2ff">Solid "shelf4"</div>
<div class="t" style="left:38px;top:302.1px;font-size:11px;color:#bfb2ff">Solid "shelf7"</div>
<div class="t" style="left:38px;top:320.2px;font-size:11px;color:#bfb2ff">Solid "shelf5"</div>
<div class="t" style="left:38px;top:338.3px;font-size:11px;color:#bfb2ff">Solid "shelf8"</div>
<div class="t" style="left:38px;top:356.4px;font-size:11px;color:#bfb2ff">Robot "Ros2Supervisor"</div>
<!-- 3d view placeholder -->

<!-- text editor -->
<div class="a" style="left:818.500px;top:22px;width:1.500px;height:855px;background:#d6d6d6"></div>
<svg class="a" style="left:833px;top:28px" width="8" height="8" viewBox="0 0 8 8" stroke="#e0e0e0" stroke-width="1.100"><path d="M.8 .8l6.400 6.400M7.200 .8L.8 7.200"/></svg>
<svg class="a" style="left:861px;top:27px" width="10" height="10" viewBox="0 0 10 10" fill="none" stroke="#e0e0e0" stroke-width="1.100"><rect x="1" y="3.500" width="5.500" height="5.500" rx=".8"/><path d="M3.500 3.500v-2.300h5.300v5.300h-2.300"/></svg>
<div class="a" style="left:891px;top:28.500px;width:6.500px;height:6.500px;border:1.200px solid #e0e0e0;border-radius:1px"></div>
<div class="wt" style="left:914px;top:26.500px">Text Editor</div>
<svg class="a" style="left:826.5px;top:49.5px" width="12" height="15" viewBox="0 0 12 15" ><path d="M1.500 1h6l3.500 3.500v9.500h-9.500z" fill="none" stroke="#cfcfcf" stroke-width="1.300"/><path d="M7.500 1v3.500h3.500" fill="none" stroke="#cfcfcf" stroke-width="1.100"/></svg>
<svg class="a" style="left:849.5px;top:50.0px" width="16" height="14" viewBox="0 0 16 14" ><path d="M1 2h5l1.500 2h6v3H3.500L1 12.500z" fill="#cfcfcf"/><path d="M4 7.500h11.500l-2.500 6H1.500z" fill="#cfcfcf"/></svg>
<svg class="a" style="left:875.0px;top:50.0px" width="14" height="14" viewBox="0 0 14 14" ><path d="M1 1h10l2 2v10H1z" fill="#363636"/><rect x="3.500" y="2" width="6" height="3" fill="#464646"/><rect x="3" y="8" width="8" height="4" fill="#404040"/></svg>
<svg class="a" style="left:900.0px;top:50.0px" width="14" height="14" viewBox="0 0 14 14" ><path d="M1 1h10l2 2v10H1z" fill="#363636"/><rect x="3.500" y="2" width="6" height="3" fill="#464646"/><rect x="3" y="8" width="8" height="4" fill="#404040"/></svg>
<svg class="a" style="left:924.5px;top:49.5px" width="15" height="15" viewBox="0 0 15 15" ><circle cx="7.500" cy="7.500" r="5.500" fill="none" stroke="#363636" stroke-width="2.200"/></svg>
<div class="a" style="left:946px;top:50px;width:1px;height:14px;background:#5a5a5a"></div>
<svg class="a" style="left:953.5px;top:49.5px" width="15" height="15" viewBox="0 0 15 15" ><circle cx="6" cy="6" r="4.500" fill="none" stroke="#363636" stroke-width="2"/><path d="M9.500 9.500l4.500 4.500" stroke="#363636" stroke-width="2.400"/></svg>
<svg class="a" style="left:978.5px;top:49.5px" width="15" height="15" viewBox="0 0 15 15" ><circle cx="6" cy="6" r="4.500" fill="none" stroke="#363636" stroke-width="2"/><path d="M9.500 9.500l4.500 4.500" stroke="#363636" stroke-width="2.400"/></svg>
<div class="a" style="left:1001px;top:50px;width:1px;height:14px;background:#5a5a5a"></div>
<svg class="a" style="left:1007.5px;top:49.5px" width="15" height="15" viewBox="0 0 15 15" ><circle cx="7.500" cy="7.500" r="4" fill="none" stroke="#363636" stroke-width="3.500" stroke-dasharray="2.500 1.500"/><circle cx="7.500" cy="7.500" r="4.500" fill="none" stroke="#363636" stroke-width="1.500"/></svg>
<svg class="a" style="left:1032.5px;top:49.5px" width="15" height="15" viewBox="0 0 15 15" ><path d="M2 2l11 11" stroke="#363636" stroke-width="4"/></svg>
<!-- console -->
<div class="a" style="left:0;top:877px;width:1054px;height:2px;background:#c4c4c4"></div>
<div class="a" style="left:0;top:879px;width:1054px;height:19px;background:#3d3d3d"></div>
<svg class="a" style="left:13px;top:884px" width="8" height="8" viewBox="0 0 8 8" stroke="#e0e0e0" stroke-width="1.100"><path d="M.8 .8l6.400 6.400M7.200 .8L.8 7.200"/></svg>
<svg class="a" style="left:40px;top:883px" width="10" height="10" viewBox="0 0 10 10" fill="none" stroke="#e0e0e0" stroke-width="1.100"><rect x="1" y="3.500" width="5.500" height="5.500" rx=".8"/><path d="M3.500 3.500v-2.300h5.300v5.300h-2.300"/></svg>
<div class="a" style="left:70.500px;top:884.500px;width:6.500px;height:6.500px;border:1.200px solid #e0e0e0;border-radius:1px"></div>
<div class="wt" style="left:93px;top:882.500px;color:#f0f0f0">Console - All</div>
<div class="a" style="left:1px;top:898px;width:1053px;height:159px;background:#212121"></div>
<pre class="a" style="left:3px;top:902px;font-family:'Liberation Mono','DejaVu Sans Mono',monospace;font-size:11.480px;line-height:13.200px;color:#3fa9b8;letter-spacing:0">INFO: 'robot1' extern controller: Waiting for local or remote connection on port 1234 targeting robot named 'robot1'.
INFO: 'Ros2Supervisor' extern controller: Waiting for local or remote connection on port 1234 targeting robot named 'Ros2Supervisor'.
INFO: 'robot1' extern controller: connected.
INFO: 'Ros2Supervisor' extern controller: connected.</pre>
<div class="a" style="left:0;top:1057px;width:1054px;height:23px;background:#464646"></div>
</div>
</div>
<svg class="a" style="left:0;top:0" width="2107" height="1080" viewBox="0 0 2107 1080">
<defs><clipPath id="vc"><rect x="1281" y="72" width="590" height="804.5"/></clipPath><linearGradient id="sky" x1="0" y1="0" x2="0" y2="1"><stop offset="0" stop-color="#6883b6"/><stop offset="0.55" stop-color="#8398c2"/><stop offset="1" stop-color="#97a5c6"/></linearGradient><filter id="bl" x="-5%" y="-20%" width="110%" height="140%"><feGaussianBlur stdDeviation="2"/></filter><filter id="bl2" x="-5%" y="-20%" width="110%" height="140%"><feGaussianBlur stdDeviation="3.5"/></filter><linearGradient id="fog" gradientUnits="userSpaceOnUse" x1="1700" y1="620" x2="1860" y2="400"><stop offset="0" stop-color="#6a5a9a" stop-opacity="0"/><stop offset="1" stop-color="#6a5a9a" stop-opacity="0.42"/></linearGradient><linearGradient id="oa" gradientUnits="userSpaceOnUse" x1="1560" y1="876" x2="1871" y2="800"><stop offset="0" stop-color="#2e2e2e"/><stop offset="1" stop-color="#454545"/></linearGradient></defs>
<g clip-path="url(#vc)">
<rect x="1281" y="72" width="590" height="160" fill="url(#sky)"/>
<g filter="url(#bl)"><polygon points="1270.0,137.0 1280.0,137.0 1308.5,136.2 1337.0,138.5 1365.4,149.9 1388.2,159.8 1413.8,161.3 1439.5,158.4 1465.1,152.7 1485.0,159.8 1507.8,171.2 1530.6,181.2 1559.0,188.3 1587.5,195.4 1610.3,198.3 1633.1,191.2 1650.2,194.0 1673.0,195.4 1707.1,191.2 1735.6,194.0 1764.1,195.4 1786.9,184.6 1809.7,188.3 1838.1,186.9 1880.0,184.0 1880.0,232.0 1270.0,232.0" fill="#646880"/>
<polygon points="1270.0,160.0 1300.0,158.0 1330.0,164.0 1350.0,174.0 1380.0,178.0 1410.0,180.0 1440.0,176.0 1470.0,172.0 1500.0,184.0 1530.0,194.0 1560.0,200.0 1600.0,206.0 1640.0,206.0 1700.0,204.0 1750.0,206.0 1790.0,198.0 1830.0,200.0 1880.0,196.0 1880.0,232.0 1270.0,232.0" fill="#5a5d75" opacity="0.9"/>
<polygon points="1270.0,196.0 1310.0,194.0 1350.0,200.0 1400.0,204.0 1450.0,200.0 1490.0,204.0 1540.0,210.0 1600.0,214.0 1680.0,212.0 1760.0,212.0 1820.0,208.0 1880.0,206.0 1880.0,232.0 1270.0,232.0" fill="#63667c" opacity="0.85"/>
<polygon points="1290.0,146.0 1318.0,142.0 1340.0,156.0 1330.0,172.0 1300.0,170.0" fill="#50546c" opacity="0.7"/>
<polygon points="1385.0,178.0 1420.0,176.0 1425.0,192.0 1390.0,194.0" fill="#484c68" opacity="0.8"/>
<polygon points="1470.0,178.0 1495.0,182.0 1510.0,206.0 1485.0,212.0 1468.0,196.0" fill="#484c68" opacity="0.85"/>
<polygon points="1300.0,200.0 1360.0,198.0 1365.0,212.0 1305.0,214.0" fill="#4c506a" opacity="0.7"/>
<polygon points="1560.0,204.0 1600.0,206.0 1604.0,220.0 1565.0,220.0" fill="#4c506a" opacity="0.7"/>
<polygon points="1655.0,212.0 1685.0,208.0 1692.0,224.0 1658.0,224.0" fill="#464a64" opacity="0.8"/>
<polygon points="1720.0,204.0 1800.0,200.0 1860.0,206.0 1860.0,222.0 1730.0,222.0" fill="#70728a" opacity="0.5"/>
<polygon points="1405.0,206.0 1460.0,204.0 1462.0,222.0 1410.0,222.0" fill="#6e7088" opacity="0.5"/>
</g>
<rect x="1281" y="223.500" width="590" height="660" fill="#666666"/>
<rect x="1281" y="400" width="590" height="480" fill="#8c3b2e"/>
<rect x="1281" y="395" width="590" height="300" fill="url(#fog)"/>
<path d="M1174.2 898.0 1266.8 871.5 1283.6 924.5 1184.0 955.6zM1210.0 692.8 1274.5 679.9 1286.6 705.9 1218.7 720.4zM1228.5 751.2 1300.1 735.0 1315.3 767.7 1239.6 786.1zM1252.3 825.9 1332.5 804.7 1352.2 847.1 1266.8 871.5zM1229.2 582.6 1278.8 575.0 1288.2 590.4 1236.7 598.7zM1244.9 616.2 1298.4 607.2 1309.6 625.5 1253.8 635.4zM1263.6 656.6 1321.9 645.6 1335.5 667.8 1274.5 679.9zM1286.6 705.9 1350.5 692.3 1367.2 719.7 1300.1 735.0zM1315.3 767.7 1386.0 750.4 1407.2 785.1 1332.5 804.7zM1352.2 847.1 1431.3 824.5 1459.0 869.8 1374.9 896.0zM1241.3 513.7 1281.4 508.8 1289.1 519.0 1247.7 524.3zM1254.6 535.6 1297.4 529.9 1306.3 541.6 1262.1 547.7zM1270.1 560.9 1315.8 554.2 1326.1 567.8 1278.8 575.0zM1288.2 590.4 1337.3 582.6 1349.4 598.6 1298.4 607.2zM1309.6 625.5 1362.7 616.1 1377.2 635.2 1321.9 645.6zM1335.5 667.8 1393.1 656.3 1410.7 679.5 1350.5 692.3zM1367.2 719.7 1430.3 705.4 1452.2 734.3 1386.0 750.4zM1407.2 785.1 1476.8 766.7 1504.7 803.5 1431.3 824.5zM1459.0 869.8 1536.5 845.6 1573.2 894.1 1491.1 922.3zM1249.5 466.7 1283.3 463.2 1289.8 470.5 1255.1 474.1zM1261.1 482.0 1296.7 478.1 1304.0 486.3 1267.5 490.4zM1274.2 499.3 1311.9 494.9 1320.2 504.1 1281.4 508.8zM1289.1 519.0 1329.0 513.9 1338.5 524.4 1297.4 529.9zM1306.3 541.6 1348.7 535.7 1359.7 547.9 1315.8 554.2zM1326.1 567.8 1371.5 560.9 1384.3 575.1 1337.3 582.6zM1349.4 598.6 1398.1 590.4 1413.2 607.1 1362.7 616.1zM1377.2 635.2 1429.7 625.4 1447.7 645.4 1393.1 656.3zM1410.7 679.5 1467.7 667.4 1489.7 691.9 1430.3 705.4zM1452.2 734.3 1514.3 719.1 1541.9 749.6 1476.8 766.7zM1504.7 803.5 1573.0 784.0 1608.3 823.2 1536.5 845.6zM1573.2 894.1 1648.9 868.1 1695.9 920.1 1616.1 950.6zM1255.5 432.5 1284.6 429.9 1290.3 435.3 1260.5 438.0zM1265.7 443.8 1296.2 441.0 1302.5 447.0 1271.3 449.9zM1277.1 456.4 1309.1 453.3 1316.0 459.9 1283.3 463.2zM1289.8 470.5 1323.4 466.9 1331.2 474.4 1296.7 478.1zM1304.0 486.3 1339.4 482.3 1348.2 490.6 1311.9 494.9zM1320.2 504.1 1357.6 499.5 1367.5 509.0 1329.0 513.9zM1338.5 524.4 1378.2 519.2 1389.6 530.1 1348.7 535.7zM1359.7 547.9 1401.8 541.7 1415.0 554.3 1371.5 560.9zM1384.3 575.1 1429.2 567.9 1444.6 582.6 1398.1 590.4zM1413.2 607.1 1461.3 598.6 1479.6 616.0 1429.7 625.4zM1447.7 645.4 1499.6 635.0 1521.5 656.0 1467.7 667.4zM1489.7 691.9 1545.8 679.1 1572.8 704.8 1514.3 719.1zM1541.9 749.6 1602.9 733.6 1636.7 765.8 1573.0 784.0zM1608.3 823.2 1675.0 802.4 1718.7 844.1 1648.9 868.1zM1260.0 406.5 1285.6 404.5 1290.6 408.7 1264.5 410.7zM1269.2 415.2 1295.9 413.1 1301.3 417.7 1274.1 419.9zM1279.2 424.8 1307.0 422.5 1313.0 427.5 1284.6 429.9zM1290.3 435.3 1319.3 432.8 1325.9 438.3 1296.2 441.0zM1302.5 447.0 1332.8 444.1 1340.1 450.2 1309.1 453.3zM1316.0 459.9 1347.8 456.7 1356.0 463.5 1323.4 466.9zM1331.2 474.4 1364.6 470.7 1373.7 478.4 1339.4 482.3zM1348.2 490.6 1383.4 486.5 1393.7 495.1 1357.6 499.5zM1367.5 509.0 1404.6 504.3 1416.3 514.1 1378.2 519.2zM1389.6 530.1 1428.9 524.6 1442.3 535.9 1401.8 541.7zM1415.0 554.3 1456.7 548.0 1472.3 561.0 1429.2 567.9zM1444.6 582.6 1489.1 575.1 1507.3 590.4 1461.3 598.6zM1479.6 616.0 1527.2 607.0 1548.8 625.2 1499.6 635.0zM1521.5 656.0 1572.6 645.1 1598.8 667.1 1545.8 679.1zM1572.8 704.8 1627.8 691.4 1660.1 718.5 1602.9 733.6zM1636.7 765.8 1696.3 748.8 1737.1 783.0 1675.0 802.4zM1718.7 844.1 1783.4 821.9 1836.5 866.4 1769.1 892.2zM1271.9 393.0 1295.6 391.4 1300.4 395.0 1276.3 396.7zM1280.9 400.5 1305.4 398.7 1310.7 402.7 1285.6 404.5zM1290.6 408.7 1316.2 406.8 1321.9 411.1 1295.9 413.1zM1301.3 417.7 1327.9 415.5 1334.1 420.2 1307.0 422.5zM1313.0 427.5 1340.7 425.1 1347.5 430.2 1319.3 432.8zM1325.9 438.3 1354.8 435.6 1362.3 441.3 1332.8 444.1zM1340.1 450.2 1370.3 447.3 1378.7 453.6 1347.8 456.7zM1356.0 463.5 1387.6 460.2 1397.0 467.2 1364.6 470.7zM1373.7 478.4 1406.9 474.6 1417.4 482.5 1383.4 486.5zM1393.7 495.1 1428.6 490.9 1440.5 499.7 1404.6 504.3zM1416.3 514.1 1453.1 509.2 1466.7 519.4 1428.9 524.6zM1442.3 535.9 1481.2 530.2 1496.8 541.9 1456.7 548.0zM1472.3 561.0 1513.5 554.4 1531.6 567.9 1489.1 575.1zM1507.3 590.4 1551.2 582.6 1572.5 598.5 1527.2 607.0zM1548.8 625.2 1595.7 615.8 1621.1 634.8 1572.6 645.1zM1598.8 667.1 1649.0 655.7 1679.8 678.7 1627.8 691.4zM1660.1 718.5 1713.9 704.3 1752.1 732.9 1696.3 748.8zM1737.1 783.0 1795.0 764.9 1843.5 801.2 1783.4 821.9zM1836.5 866.4 1898.8 842.6 1962.6 890.3 1898.1 918.0zM1300.4 395.0 1324.0 393.3 1329.5 397.0 1305.4 398.7zM1310.7 402.7 1335.2 400.8 1341.1 404.9 1316.2 406.8zM1321.9 411.1 1347.3 409.0 1353.8 413.4 1327.9 415.5zM1334.1 420.2 1360.6 418.0 1367.6 422.8 1340.7 425.1zM1347.5 430.2 1375.1 427.8 1382.9 433.1 1354.8 435.6zM1362.3 441.3 1391.0 438.6 1399.7 444.4 1370.3 447.3zM1378.7 453.6 1408.7 450.5 1418.3 457.0 1387.6 460.2zM1397.0 467.2 1428.4 463.8 1439.0 471.0 1406.9 474.6zM1417.4 482.5 1450.3 478.6 1462.3 486.7 1428.6 490.9zM1440.5 499.7 1475.1 495.3 1488.7 504.5 1453.1 509.2zM1466.7 519.4 1503.2 514.3 1518.7 524.8 1481.2 530.2zM1496.8 541.9 1535.3 536.0 1553.1 548.1 1513.5 554.4zM1531.6 567.9 1572.4 561.1 1593.2 575.1 1551.2 582.6zM1572.5 598.5 1615.8 590.4 1640.3 606.9 1595.7 615.8zM1621.1 634.8 1667.1 625.0 1696.5 644.9 1649.0 655.7zM1679.8 678.7 1728.9 666.8 1764.7 691.0 1713.9 704.3zM1752.1 732.9 1804.5 717.9 1849.2 748.0 1795.0 764.9zM1843.5 801.2 1899.5 782.0 1956.6 820.6 1898.8 842.6zM1329.5 397.0 1353.0 395.3 1359.1 399.1 1335.2 400.8zM1341.1 404.9 1365.5 403.0 1372.1 407.1 1347.3 409.0zM1353.8 413.4 1379.1 411.4 1386.3 415.8 1360.6 418.0zM1367.6 422.8 1393.9 420.5 1401.9 425.4 1375.1 427.8zM1382.9 433.1 1410.2 430.5 1419.0 435.9 1391.0 438.6zM1399.7 444.4 1428.2 441.6 1437.9 447.6 1408.7 450.5zM1418.3 457.0 1448.1 453.8 1458.8 460.5 1428.4 463.8zM1439.0 471.0 1470.2 467.5 1482.2 474.9 1450.3 478.6zM1462.3 486.7 1495.0 482.7 1508.5 491.1 1475.1 495.3zM1488.7 504.5 1523.0 500.0 1538.3 509.4 1503.2 514.3zM1518.7 524.8 1554.7 519.5 1572.3 530.4 1535.3 536.0zM1553.1 548.1 1591.2 542.0 1611.5 554.5 1572.4 561.1zM1593.2 575.1 1633.4 568.0 1657.1 582.6 1615.8 590.4zM1640.3 606.9 1682.9 598.5 1710.9 615.7 1667.1 625.0zM1696.5 644.9 1741.6 634.6 1775.4 655.4 1728.9 666.8zM1764.7 691.0 1812.6 678.3 1853.9 703.8 1804.5 717.9zM1849.2 748.0 1900.0 732.2 1951.7 764.0 1899.5 782.0zM1347.1 391.7 1369.7 390.1 1376.0 393.6 1353.0 395.3zM1359.1 399.1 1382.5 397.3 1389.3 401.2 1365.5 403.0zM1372.1 407.1 1396.4 405.2 1403.8 409.4 1379.1 411.4zM1386.3 415.8 1411.5 413.7 1419.6 418.3 1393.9 420.5zM1401.9 425.4 1428.0 423.1 1436.9 428.1 1410.2 430.5zM1419.0 435.9 1446.2 433.4 1455.9 438.9 1428.2 441.6zM1437.9 447.6 1466.2 444.7 1477.0 450.8 1448.1 453.8zM1458.8 460.5 1488.4 457.3 1500.4 464.1 1470.2 467.5zM1482.2 474.9 1513.1 471.3 1526.6 478.9 1495.0 482.7zM1508.5 491.1 1540.9 487.0 1556.1 495.6 1523.0 500.0zM1538.3 509.4 1572.2 504.7 1589.5 514.5 1554.7 519.5zM1572.3 530.4 1608.0 524.9 1627.7 536.1 1591.2 542.0zM1611.5 554.5 1649.0 548.2 1671.9 561.1 1633.4 568.0zM1657.1 582.6 1696.7 575.2 1723.5 590.3 1682.9 598.5zM1710.9 615.7 1752.7 606.9 1784.5 624.9 1741.6 634.6zM1775.4 655.4 1819.4 644.7 1857.9 666.4 1812.6 678.3zM1853.9 703.8 1900.4 690.5 1947.7 717.3 1900.0 732.2zM1376.0 393.6 1398.5 392.0 1405.4 395.6 1382.5 397.3zM1389.3 401.2 1412.6 399.4 1420.1 403.3 1396.4 405.2zM1403.8 409.4 1427.9 407.4 1436.1 411.7 1411.5 413.7zM1419.6 418.3 1444.6 416.1 1453.5 420.8 1428.0 423.1zM1436.9 428.1 1462.9 425.7 1472.7 430.8 1446.2 433.4zM1455.9 438.9 1482.9 436.2 1493.8 441.9 1466.2 444.7zM1477.0 450.8 1505.1 447.8 1517.1 454.1 1488.4 457.3zM1500.4 464.1 1529.7 460.7 1543.1 467.7 1513.1 471.3zM1526.6 478.9 1557.2 475.1 1572.2 483.0 1540.9 487.0zM1556.1 495.6 1588.1 491.3 1605.0 500.2 1572.2 504.7zM1589.5 514.5 1623.0 509.6 1642.3 519.7 1608.0 524.9zM1627.7 536.1 1662.9 530.5 1685.0 542.1 1649.0 548.2zM1671.9 561.1 1708.8 554.6 1734.5 568.0 1696.7 575.2zM1723.5 590.3 1762.3 582.6 1792.5 598.4 1752.7 606.9zM1784.5 624.9 1825.3 615.6 1861.3 634.5 1819.4 644.7zM1857.9 666.4 1900.8 655.1 1944.3 678.0 1900.4 690.5zM1405.4 395.6 1427.8 393.9 1435.4 397.6 1412.6 399.4zM1420.1 403.3 1443.3 401.5 1451.5 405.5 1427.9 407.4zM1436.1 411.7 1460.1 409.7 1469.0 414.0 1444.6 416.1zM1453.5 420.8 1478.4 418.6 1488.2 423.4 1462.9 425.7zM1472.7 430.8 1498.5 428.4 1509.2 433.7 1482.9 436.2zM1493.8 441.9 1520.6 439.2 1532.5 445.0 1505.1 447.8zM1517.1 454.1 1545.0 451.1 1558.2 457.5 1529.7 460.7zM1543.1 467.7 1572.1 464.3 1586.9 471.5 1557.2 475.1zM1572.2 483.0 1602.5 479.1 1619.1 487.2 1588.1 491.3zM1605.0 500.2 1636.7 495.8 1655.4 504.9 1623.0 509.6zM1642.3 519.7 1675.4 514.7 1696.8 525.1 1662.9 530.5zM1685.0 542.1 1719.7 536.3 1744.3 548.3 1708.8 554.6zM1734.5 568.0 1770.8 561.2 1799.4 575.2 1762.3 582.6zM1792.5 598.4 1830.5 590.3 1864.2 606.8 1825.3 615.6zM1861.3 634.5 1901.1 624.7 1941.4 644.4 1900.8 655.1zM1435.4 397.6 1457.6 395.9 1465.9 399.7 1443.3 401.5zM1451.5 405.5 1474.5 403.6 1483.5 407.7 1460.1 409.7zM1469.0 414.0 1492.9 412.0 1502.6 416.4 1478.4 418.6zM1488.2 423.4 1512.9 421.1 1523.6 426.0 1498.5 428.4zM1509.2 433.7 1534.9 431.1 1546.7 436.5 1520.6 439.2zM1532.5 445.0 1559.1 442.2 1572.1 448.1 1545.0 451.1zM1558.2 457.5 1585.8 454.4 1600.3 461.0 1572.1 464.3zM1586.9 471.5 1615.7 468.0 1631.9 475.4 1602.5 479.1zM1619.1 487.2 1649.0 483.2 1667.3 491.6 1636.7 495.8zM1655.4 504.9 1686.6 500.4 1707.3 509.8 1675.4 514.7zM1696.8 525.1 1729.4 519.9 1753.0 530.7 1719.7 536.3zM1744.3 548.3 1778.3 542.2 1805.6 554.7 1770.8 561.2zM1799.4 575.2 1835.0 568.1 1866.8 582.6 1830.5 590.3zM1864.2 606.8 1901.3 598.4 1938.9 615.5 1901.1 624.7zM1449.7 392.3 1471.2 390.7 1479.4 394.2 1457.6 395.9zM1465.9 399.7 1488.0 397.9 1497.0 401.8 1474.5 403.6zM1483.5 407.7 1506.4 405.8 1516.1 410.0 1492.9 412.0zM1502.6 416.4 1526.3 414.3 1537.0 418.9 1512.9 421.1zM1523.6 426.0 1548.1 423.7 1559.8 428.7 1534.9 431.1zM1546.7 436.5 1572.1 433.9 1584.9 439.5 1559.1 442.2zM1572.1 448.1 1598.5 445.3 1612.7 451.4 1585.8 454.4zM1600.3 461.0 1627.7 457.8 1643.6 464.6 1615.7 468.0zM1631.9 475.4 1660.3 471.8 1678.0 479.4 1649.0 483.2zM1667.3 491.6 1696.9 487.4 1716.8 496.0 1686.6 500.4zM1707.3 509.8 1738.1 505.1 1760.8 514.9 1729.4 519.9zM1753.0 530.7 1785.1 525.3 1811.1 536.4 1778.3 542.2zM1805.6 554.7 1839.0 548.4 1869.1 561.3 1835.0 568.1zM1866.8 582.6 1901.6 575.2 1936.8 590.3 1901.3 598.4zM1479.4 394.2 1500.8 392.6 1509.7 396.2 1488.0 397.9zM1497.0 401.8 1519.0 400.0 1528.7 403.9 1506.4 405.8zM1516.1 410.0 1538.9 408.0 1549.4 412.3 1526.3 414.3zM1537.0 418.9 1560.5 416.7 1572.0 421.4 1548.1 423.7zM1559.8 428.7 1584.1 426.3 1596.8 431.4 1572.1 433.9zM1584.9 439.5 1610.1 436.8 1624.1 442.5 1598.5 445.3zM1612.7 451.4 1638.8 448.4 1654.3 454.7 1627.7 457.8zM1643.6 464.6 1670.6 461.3 1687.9 468.3 1660.3 471.8zM1678.0 479.4 1706.1 475.7 1725.5 483.5 1696.9 487.4zM1716.8 496.0 1746.0 491.8 1767.9 500.6 1738.1 505.1zM1760.8 514.9 1791.1 510.0 1816.0 520.1 1785.1 525.3zM1811.1 536.4 1842.6 530.8 1871.1 542.4 1839.0 548.4zM1869.1 561.3 1901.8 554.8 1934.8 568.1 1901.6 575.2zM1509.7 396.2 1530.9 394.5 1540.6 398.2 1519.0 400.0zM1528.7 403.9 1550.6 402.1 1561.1 406.1 1538.9 408.0zM1549.4 412.3 1572.0 410.3 1583.4 414.6 1560.5 416.7zM1572.0 421.4 1595.4 419.2 1607.8 424.0 1584.1 426.3zM1596.8 431.4 1620.9 429.0 1634.6 434.2 1610.1 436.8zM1624.1 442.5 1649.0 439.8 1664.2 445.6 1638.8 448.4zM1654.3 454.7 1680.1 451.7 1696.9 458.1 1670.6 461.3zM1687.9 468.3 1714.6 464.9 1733.4 472.0 1706.1 475.7zM1725.5 483.5 1753.2 479.6 1774.3 487.7 1746.0 491.8zM1767.9 500.6 1796.6 496.2 1820.4 505.3 1791.1 510.0zM1816.0 520.1 1845.8 515.1 1872.9 525.4 1842.6 530.8zM1540.6 398.2 1561.6 396.5 1572.0 400.3 1550.6 402.1zM1561.1 406.1 1582.8 404.2 1594.1 408.3 1572.0 410.3zM1583.4 414.6 1605.8 412.6 1618.1 417.0 1595.4 419.2zM1607.8 424.0 1631.0 421.7 1644.4 426.6 1620.9 429.0zM1634.6 434.2 1658.5 431.7 1673.3 437.1 1649.0 439.8zM1664.2 445.6 1688.9 442.8 1705.2 448.7 1680.1 451.7zM1696.9 458.1 1722.4 455.0 1740.6 461.6 1714.6 464.9zM1733.4 472.0 1759.8 468.5 1780.1 475.9 1753.2 479.6zM1774.3 487.7 1801.6 483.7 1824.4 492.0 1796.6 496.2zM1820.4 505.3 1848.7 500.8 1874.5 510.2 1845.8 515.1zM1551.7 392.9 1572.0 391.3 1582.2 394.8 1561.6 396.5zM1572.0 400.3 1592.9 398.5 1604.0 402.4 1582.8 404.2zM1594.1 408.3 1615.6 406.4 1627.7 410.6 1605.8 412.6zM1618.1 417.0 1640.3 414.9 1653.5 419.5 1631.0 421.7zM1644.4 426.6 1667.3 424.3 1681.8 429.3 1658.5 431.7zM1673.3 437.1 1697.0 434.5 1712.9 440.0 1688.9 442.8zM1705.2 448.7 1729.6 445.8 1747.3 451.9 1722.4 455.0zM1740.6 461.6 1765.8 458.4 1785.4 465.1 1759.8 468.5zM1780.1 475.9 1806.1 472.3 1828.0 479.9 1801.6 483.7zM1824.4 492.0 1851.3 487.9 1876.0 496.5 1848.7 500.8zM1582.2 394.8 1602.4 393.2 1613.3 396.8 1592.9 398.5zM1604.0 402.4 1624.8 400.6 1636.7 404.5 1615.6 406.4zM1627.7 410.6 1649.1 408.6 1662.0 412.9 1640.3 414.9zM1653.5 419.5 1675.5 417.4 1689.7 422.0 1667.3 424.3zM1681.8 429.3 1704.5 426.9 1720.0 432.0 1697.0 434.5zM1712.9 440.0 1736.3 437.4 1753.4 443.0 1729.6 445.8zM1747.3 451.9 1771.4 449.0 1790.3 455.2 1765.8 458.4zM1785.4 465.1 1810.3 461.8 1831.4 468.8 1806.1 472.3zM1828.0 479.9 1853.7 476.2 1877.3 484.0 1851.3 487.9zM1613.3 396.8 1633.4 395.1 1645.1 398.8 1624.8 400.6zM1636.7 404.5 1657.2 402.7 1669.9 406.7 1649.1 408.6zM1662.0 412.9 1683.2 410.9 1697.0 415.2 1675.5 417.4zM1689.7 422.0 1711.5 419.8 1726.6 424.6 1704.5 426.9zM1720.0 432.0 1742.4 429.6 1759.1 434.8 1736.3 437.4zM1753.4 443.0 1776.5 440.3 1794.8 446.1 1771.4 449.0zM1790.3 455.2 1814.1 452.2 1834.4 458.6 1810.3 461.8zM1831.4 468.8 1855.9 465.4 1878.5 472.6 1853.7 476.2zM1622.1 391.6 1641.4 390.0 1652.9 393.5 1633.4 395.1zM1645.1 398.8 1664.9 397.1 1677.4 400.9 1657.2 402.7zM1669.9 406.7 1690.3 404.8 1703.9 408.9 1683.2 410.9zM1697.0 415.2 1718.0 413.2 1732.7 417.7 1711.5 419.8zM1726.6 424.6 1748.2 422.3 1764.3 427.2 1742.4 429.6zM1759.1 434.8 1781.2 432.3 1799.0 437.7 1776.5 440.3zM1794.8 446.1 1817.6 443.3 1837.2 449.3 1814.1 452.2zM1834.4 458.6 1857.9 455.5 1879.7 462.1 1855.9 465.4zM1652.9 393.5 1672.1 391.9 1684.3 395.5 1664.9 397.1zM1677.4 400.9 1697.0 399.1 1710.3 403.0 1690.3 404.8zM1703.9 408.9 1724.1 407.0 1738.5 411.2 1718.0 413.2zM1732.7 417.7 1753.5 415.5 1769.2 420.1 1748.2 422.3zM1764.3 427.2 1785.6 424.9 1802.9 429.9 1781.2 432.3zM1799.0 437.7 1820.9 435.1 1839.8 440.6 1817.6 443.3zM1837.2 449.3 1859.7 446.4 1880.7 452.5 1857.9 455.5zM1684.3 395.5 1703.4 393.8 1716.3 397.4 1697.0 399.1zM1710.3 403.0 1729.8 401.2 1743.8 405.1 1724.1 407.0zM1738.5 411.2 1758.5 409.2 1773.8 413.5 1753.5 415.5zM1769.2 420.1 1789.7 417.9 1806.4 422.6 1785.6 424.9zM1802.9 429.9 1823.9 427.5 1842.2 432.6 1820.9 435.1zM1839.8 440.6 1861.4 438.0 1881.6 443.6 1859.7 446.4zM1716.3 397.4 1735.2 395.8 1748.9 399.4 1729.8 401.2zM1743.8 405.1 1763.2 403.3 1778.0 407.3 1758.5 409.2zM1773.8 413.5 1793.6 411.5 1809.8 415.8 1789.7 417.9zM1806.4 422.6 1826.7 420.4 1844.5 425.2 1823.9 427.5zM1842.2 432.6 1863.0 430.2 1882.5 435.4 1861.4 438.0zM1722.0 392.2 1740.2 390.6 1753.6 394.1 1735.2 395.8zM1748.9 399.4 1767.5 397.7 1782.0 401.5 1763.2 403.3zM1778.0 407.3 1797.2 405.4 1812.9 409.5 1793.6 411.5zM1809.8 415.8 1829.4 413.8 1846.6 418.2 1826.7 420.4zM1844.5 425.2 1864.5 422.9 1883.3 427.8 1863.0 430.2zM1753.6 394.1 1771.7 392.5 1785.8 396.1 1767.5 397.7zM1782.0 401.5 1800.5 399.7 1815.9 403.6 1797.2 405.4zM1812.9 409.5 1831.8 407.6 1848.5 411.8 1829.4 413.8zM1846.6 418.2 1865.9 416.1 1884.1 420.7 1864.5 422.9zM1785.8 396.1 1803.7 394.4 1818.6 398.0 1800.5 399.7zM1815.9 403.6 1834.1 401.8 1850.3 405.7 1831.8 407.6zM1848.5 411.8 1867.2 409.8 1884.8 414.1 1865.9 416.1zM1818.6 398.0 1836.3 396.4 1852.0 400.0 1834.1 401.8zM1850.3 405.7 1868.4 403.9 1885.4 407.9 1867.2 409.8zM1821.2 392.8 1838.3 391.2 1853.6 394.7 1836.3 396.4zM1852.0 400.0 1869.5 398.3 1886.0 402.1 1868.4 403.9zM1853.6 394.7 1870.6 393.1 1886.6 396.7 1869.5 398.3z" fill="#f1c6b3"/>
<polygon points="1553.0,877.0 1871.0,772.5 1871.0,877.0" fill="url(#oa)"/>
<path d="M1553 877L1871 772.500" stroke="#3f4f7c" stroke-width="2.200"/>
<polygon points="1402.0,336.0 1492.0,331.8 1492.0,362.0 1402.0,348.0" fill="#575b60"/>
<polygon points="1527.6,304.6 1754.2,295.3 1754.2,340.0 1569.4,400.0 1527.8,400.0" fill="#2d0e15"/>
<polygon points="1492.3,298.5 1527.5,304.6 1527.8,392.0 1499.0,392.0 1492.6,360.0" fill="#b8233c"/>
<polygon points="1492.3,298.5 1690.0,290.4 1754.2,295.3 1527.6,304.6" fill="#da2e4b"/>
<polygon points="1620.4,320.2 1870.9,307.9 1870.9,359.4 1680.3,423.6 1619.0,398.3" fill="#2d0e15"/>
<polygon points="1569.4,311.8 1620.4,320.2 1619.5,401.0 1569.4,387.0" fill="#b8233c"/>
<polygon points="1569.4,311.8 1808.6,300.7 1870.9,306.6 1870.9,307.9 1620.4,320.2" fill="#da2e4b"/>
<polygon points="1758.1,343.5 1870.9,337.1 1870.9,463.0 1752.2,479.0" fill="#2d0e15"/>
<polygon points="1681.3,330.9 1758.1,343.5 1752.2,479.0 1679.3,452.8" fill="#b8233c"/>
<polygon points="1681.3,330.9 1870.9,319.6 1870.9,337.1 1758.1,343.5" fill="#da2e4b"/>
<polygon points="1857.2,360.4 1870.9,359.4 1870.9,522.5 1845.4,512.8" fill="#b8233c"/>
<polygon points="1281.0,318.0 1340.7,311.2 1340.7,321.5 1281.0,330.0" fill="#2d0e15"/>
<polygon points="1281.0,306.0 1319.9,304.6 1340.7,311.2 1281.0,318.0" fill="#da2e4b"/>
<polygon points="1281.0,337.1 1402.1,330.7 1402.1,348.0 1281.0,362.0" fill="#2d0e15"/>
<polygon points="1281.0,322.9 1367.5,320.2 1402.1,330.7 1281.0,337.1" fill="#da2e4b"/>
<polygon points="1281.0,376.0 1498.2,361.0 1498.2,392.0 1281.0,416.0" fill="#2d0e15"/>
<polygon points="1281.0,352.6 1445.3,343.9 1498.2,361.0 1281.0,376.0" fill="#da2e4b"/>
<polygon points="1281.0,454.7 1671.5,414.9 1667.0,623.6 1281.0,706.4" fill="#2d0e15"/>
<polygon points="1281.0,407.1 1571.4,384.3 1671.5,414.9 1281.0,454.7" fill="#da2e4b"/>
<g>
<g transform="rotate(-12 1584.3 818.1)"><ellipse cx="1584.3" cy="818.1" rx="5.5" ry="9.8" fill="#25282e"/><ellipse cx="1585.1" cy="818.1" rx="2.8" ry="5.4" fill="#8088a0"/><ellipse cx="1585.1" cy="818.1" rx="1.2" ry="2.4" fill="#d8dce8"/></g>
<g transform="rotate(0 1676.6 825.1)"><ellipse cx="1676.6" cy="825.1" rx="9.4" ry="9.8" fill="#25282e"/><ellipse cx="1677.4" cy="825.1" rx="4.7" ry="5.4" fill="#8088a0"/><ellipse cx="1677.4" cy="825.1" rx="2.1" ry="2.4" fill="#d8dce8"/></g>
<g transform="rotate(-15 1636.1 844.2)"><ellipse cx="1636.1" cy="844.2" rx="11.2" ry="7.2" fill="#25282e"/><ellipse cx="1636.9" cy="844.2" rx="5.6" ry="4.0" fill="#8088a0"/><ellipse cx="1636.9" cy="844.2" rx="2.5" ry="1.8" fill="#d8dce8"/></g>
<polygon points="1587.5,819.7 1591.9,818.1 1626.0,835.2 1675.5,812.8 1675.5,815.5 1652.6,838.9 1640.9,834.1 1623.9,844.2" fill="#9c2838"/>
<polygon points="1640.9,833.0 1660.1,821.3 1668.6,828.8 1652.6,838.9" fill="#b02f41"/>
<polygon points="1591.9,809.6 1619.6,824.5 1619.6,840.5 1591.9,823.5" fill="#5a2a34" opacity="0.55"/>
<polygon points="1619.6,826.7 1659.0,809.6 1659.0,820.3 1634.5,834.1 1619.6,840.5" fill="#3a1a22" opacity="0.6"/>
<polygon points="1595.7,823.5 1602.1,820.8 1617.0,829.3 1614.3,834.6 1606.8,833.0" fill="#1d5a4a"/>
<path d="M1600.5,823.5L1613.8,831.4M1598.9,825.1L1611.1,832.5" stroke="#28d040" stroke-width="0.900" stroke-dasharray="0.800 1.200" fill="none"/>
<polygon points="1590.3,812.3 1595.1,809.6 1634.5,830.9 1676.0,809.6 1676.0,812.3 1634.5,835.2 1619.6,828.2" fill="#b02f41"/>
<path d="M1591.1,803.2L1591.1,824.5M1619.3,819.2L1619.3,840.5M1657.9,812.8L1657.9,820.8M1673.4,805.9L1673.4,813.9M1634.5,826.7L1634.5,832.0" stroke="#1c2024" stroke-width="1.100" fill="none"/>
<polygon points="1578.1,792.6 1633.5,764.9 1687.8,797.4 1634.5,826.9" fill="#b23042"/>
<polygon points="1635.1,780.9 1657.4,780.9 1657.4,787.8 1647.3,794.2 1635.1,787.3" fill="#0d0d10"/>
<rect x="1638.3" y="776.6" width="17" height="5" fill="#0d0d10"/><ellipse cx="1646.8" cy="781.6" rx="8.500" ry="4.600" fill="#0d0d10"/><ellipse cx="1646.8" cy="776.6" rx="8.500" ry="4.600" fill="#1c1c20"/><ellipse cx="1644.8" cy="776.1" rx="4" ry="1.600" fill="#3a3a40" transform="rotate(18 1646.8 776.6)"/>
</g>
</g></svg>
</body></html>
